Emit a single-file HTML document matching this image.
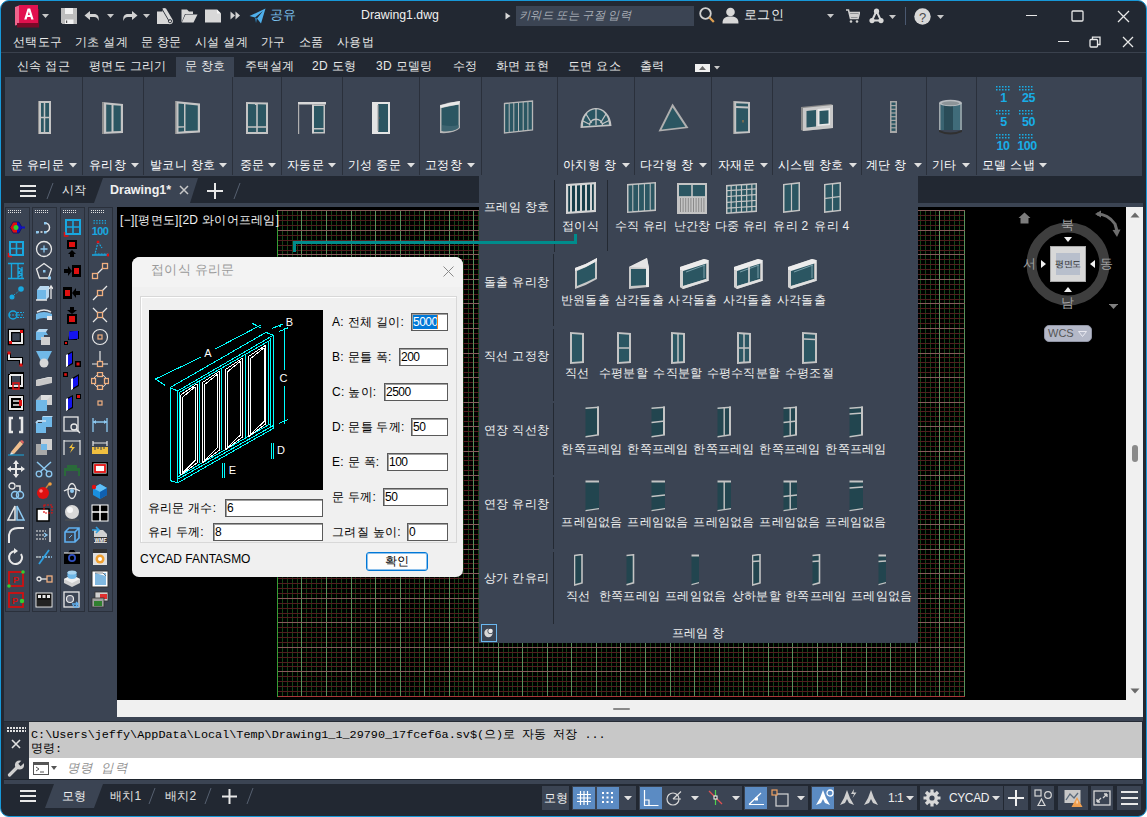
<!DOCTYPE html><html><head><meta charset="utf-8"><style>
*{box-sizing:border-box}
html,body{margin:0;padding:0;width:1147px;height:817px;overflow:hidden;background:#ffffff;font-family:"Liberation Sans",sans-serif}
#win{position:absolute;left:0;top:0;width:1147px;height:817px;background:#222832;border:1px solid #1798d8;border-radius:9px;overflow:hidden}
#root{position:absolute;left:0;top:0;width:1147px;height:817px}
</style></head><body><div id="win"></div><div id="root">
<div style="position:absolute;left:5px;top:77px;width:1137px;height:99px;background:#3b4453;"></div><div style="position:absolute;left:176px;top:57px;width:58px;height:20px;background:#3b4453;"></div><div style="position:absolute;left:1px;top:52px;width:1145px;height:1px;background:#3a414d;"></div><div style="position:absolute;left:4px;top:203px;width:1139px;height:4px;background:#3b4453;"></div><div style="position:absolute;left:4px;top:207px;width:113px;height:514px;background:#3b4453;"></div><div style="position:absolute;left:117px;top:207px;width:1009px;height:493px;background:#000;"></div><div style="position:absolute;left:1126px;top:207px;width:17px;height:510px;background:#f0f0f0;"></div><div style="position:absolute;left:117px;top:700px;width:1009px;height:17px;background:#f0f0f0;"></div><div style="position:absolute;left:117px;top:717px;width:1026px;height:4px;background:#3b4453;"></div><div style="position:absolute;left:4px;top:721px;width:1139px;height:1px;background:#252b35;"></div><div style="position:absolute;left:4px;top:722px;width:25px;height:57px;background:#2c323d;"></div><div style="position:absolute;left:29px;top:722px;width:1113px;height:36px;background:#c8c8c8;"></div><div style="position:absolute;left:29px;top:758px;width:1113px;height:21px;background:#ffffff;"></div><div style="position:absolute;left:4px;top:779px;width:1139px;height:1px;background:#1e242d;"></div><div style="position:absolute;left:4px;top:780px;width:1139px;height:4px;background:#3b4453;"></div>
<svg style="position:absolute;left:14px;top:5px;" width="26" height="23" viewBox="0 0 26 23">
      <path d="M1 2 L5 0.5 L5 19.5 L1 20.5Z" fill="#f0648c"/>
      <rect x="3" y="18" width="22" height="4.5" fill="#7a0a28"/><rect x="23" y="4" width="2" height="16" fill="#7a0a28"/>
      <rect x="5" y="0" width="19" height="18" fill="#e2114f"/>
      <path d="M10.2 14.6 L13.6 3.4 H16.2 L19.6 14.6 H17.2 L16.5 12.1 H13.3 L12.6 14.6Z M13.9 10.1 H15.9 L14.9 6.4Z" fill="#fff"/></svg><svg style="position:absolute;left:42.0px;top:14.0px;" width="7" height="4" viewBox="0 0 7 4"><path d="M0 0H7L3.5 4Z" fill="#c8c8c8"/></svg><svg style="position:absolute;left:61px;top:8px;" width="17" height="17" viewBox="0 0 17 17"><path d="M0 0 H16 V16 H1.5 L0 14.5Z" fill="#bdbdbd"/><rect x="4" y="0" width="8" height="6" fill="#f2f2f2"/><rect x="4" y="11.5" width="8.5" height="4.5" fill="#f2f2f2"/><rect x="5" y="12.5" width="1.2" height="2.5" fill="#555"/></svg><svg style="position:absolute;left:84px;top:10px;" width="18" height="12" viewBox="0 0 18 12"><path d="M6 1 L0.5 5.5 L6 10 V7 H10 C12.5 7 14 8.5 14.5 11 C15.5 6.5 13.5 4 10 4 H6Z" fill="#d2d2d2"/></svg><svg style="position:absolute;left:107.0px;top:13.5px;" width="7" height="4" viewBox="0 0 7 4"><path d="M0 0H7L3.5 4Z" fill="#c8c8c8"/></svg><svg style="position:absolute;left:120px;top:10px;" width="18" height="12" viewBox="0 0 18 12"><path d="M12 1 L17.5 5.5 L12 10 V7 H8 C5.5 7 4 8.5 3.5 11 C2.5 6.5 4.5 4 8 4 H12Z" fill="#d2d2d2"/></svg><svg style="position:absolute;left:143.0px;top:13.5px;" width="7" height="4" viewBox="0 0 7 4"><path d="M0 0H7L3.5 4Z" fill="#c8c8c8"/></svg><svg style="position:absolute;left:157px;top:8px;" width="17" height="17" viewBox="0 0 17 17"><path d="M0 3.5 H5.5 L5.5 0.5 Q7 -0.5 9 0.5 L15.5 11.5 Q16.5 14 15 15.5 Q13.5 16.5 11.5 16 H0Z" fill="#d8d8d8"/><path d="M5 1 L12 13" stroke="#222832" stroke-width="0.9"/><circle cx="13" cy="13.2" r="1.6" fill="none" stroke="#222832" stroke-width="0.9"/></svg><svg style="position:absolute;left:181px;top:9px;" width="17" height="14" viewBox="0 0 17 14"><path d="M0.5 0.5 H6 L8 2.5 H12 V5 H4 L0.5 13.5Z" fill="#d8d8d8"/><path d="M4.5 5.5 H16.5 L12.5 13.5 H0.8Z" fill="#d8d8d8"/></svg><svg style="position:absolute;left:205px;top:9px;" width="17" height="14" viewBox="0 0 17 14"><path d="M0 0.5 H12 L16 4.5 V13.5 H0Z" fill="#d8d8d8"/><path d="M12 0.5 L16 4.5 H12Z" fill="#f4f4f4"/></svg><svg style="position:absolute;left:230px;top:11px;" width="11" height="9" viewBox="0 0 11 9"><path d="M0.5 0.5 L5 4.5 L0.5 8.5Z M5.5 0.5 L10 4.5 L5.5 8.5Z" fill="#d2d2d2"/></svg><svg style="position:absolute;left:249px;top:8px;" width="17" height="16" viewBox="0 0 17 16"><path d="M0.5 8 L16.5 0.5 L12 15.5 L8 10.5 L14 3 L6 9.5Z" fill="#4fb0ec"/><path d="M6 9.5 L7 15 L8 10.5Z" fill="#2f86c0"/></svg><div style="position:absolute;left:270px;top:7.25px;line-height:16.5px;font-size:12.5px;color:#7cc0ee;white-space:nowrap;;letter-spacing:0.3px">공유</div><div style="position:absolute;left:361px;top:7.35px;line-height:16.3px;font-size:12.3px;color:#f0f0f0;white-space:nowrap;">Drawing1.dwg</div><svg style="position:absolute;left:505px;top:12px;" width="6" height="8" viewBox="0 0 6 8"><path d="M0.5 0.5 L5.5 4 L0.5 7.5Z" fill="#d8d8d8"/></svg><div style="position:absolute;left:516px;top:6px;width:178px;height:20px;background:#3b4453;"></div><div style="position:absolute;left:519px;top:8.35px;line-height:15.3px;font-size:11.3px;color:#a8adb5;white-space:nowrap;font-style:italic;letter-spacing:0.3px">키워드 또는 구절 입력</div><svg style="position:absolute;left:699px;top:7px;" width="16" height="17" viewBox="0 0 16 17"><circle cx="6.5" cy="6.5" r="5.3" stroke="#d0d0d0" stroke-width="1.8" fill="none"/><path d="M10.3 10.3 L14.8 15" stroke="#e0a050" stroke-width="2.2"/></svg><svg style="position:absolute;left:722px;top:7px;" width="17" height="17" viewBox="0 0 17 17"><circle cx="8.5" cy="5" r="4.3" fill="#d8d8d8"/><path d="M0.5 16.5 C0.5 11 3.5 9.5 8.5 9.5 C13.5 9.5 16.5 11 16.5 16.5Z" fill="#d8d8d8"/></svg><div style="position:absolute;left:744px;top:7.25px;line-height:16.5px;font-size:12.5px;color:#f0f0f0;white-space:nowrap;;letter-spacing:0.3px">로그인</div><svg style="position:absolute;left:827.0px;top:13.5px;" width="7" height="4" viewBox="0 0 7 4"><path d="M0 0H7L3.5 4Z" fill="#c8c8c8"/></svg><svg style="position:absolute;left:846px;top:9px;" width="14" height="14" viewBox="0 0 14 14"><path d="M0 1 H2.5 L4.5 9.5 H12 L13.5 3.5 H3.5" stroke="#d0d0d0" stroke-width="1.6" fill="none"/><rect x="4" y="4.5" width="8.5" height="4" fill="#d0d0d0"/><circle cx="5" cy="12.5" r="1.3" fill="#d0d0d0"/><circle cx="11" cy="12.5" r="1.3" fill="#d0d0d0"/></svg><svg style="position:absolute;left:869px;top:8px;" width="16" height="16" viewBox="0 0 16 16"><path d="M7.5 3 L3 12.5 H12Z" stroke="#d8d8d8" stroke-width="2" fill="none"/><circle cx="7.5" cy="3.2" r="2.6" fill="#d8d8d8"/><circle cx="3" cy="12.6" r="2.6" fill="#d8d8d8"/><circle cx="12" cy="12.6" r="2.6" fill="#d8d8d8"/></svg><svg style="position:absolute;left:889.0px;top:14.5px;" width="7" height="4" viewBox="0 0 7 4"><path d="M0 0H7L3.5 4Z" fill="#c8c8c8"/></svg><div style="position:absolute;left:905px;top:7px;width:1px;height:18px;background:#4a5870;"></div><svg style="position:absolute;left:914px;top:8px;" width="17" height="17" viewBox="0 0 17 17"><circle cx="8.5" cy="8.5" r="8.2" fill="#d8d8d8"/><text x="8.5" y="13.5" font-size="13" text-anchor="middle" fill="#4a4a4a" font-family="Liberation Sans">?</text></svg><svg style="position:absolute;left:937.0px;top:14.5px;" width="7" height="4" viewBox="0 0 7 4"><path d="M0 0H7L3.5 4Z" fill="#c8c8c8"/></svg><div style="position:absolute;left:1026px;top:15px;width:11px;height:1px;background:#e8e8e8;"></div><svg style="position:absolute;left:1071px;top:10px;" width="13" height="12" viewBox="0 0 13 12"><rect x="1" y="1" width="11" height="10" stroke="#e8e8e8" stroke-width="1.3" fill="none" rx="1"/></svg><svg style="position:absolute;left:1117px;top:10px;" width="13" height="13" viewBox="0 0 13 13"><path d="M1 1 L12 12 M12 1 L1 12" stroke="#e8e8e8" stroke-width="1.3"/></svg><div style="position:absolute;left:1058px;top:41px;width:11px;height:1px;background:#e8e8e8;"></div><svg style="position:absolute;left:1089px;top:36px;" width="12" height="12" viewBox="0 0 12 12"><rect x="1" y="3.5" width="7.5" height="7.5" stroke="#e8e8e8" stroke-width="1.3" fill="none" rx="1"/><path d="M3.5 3.5 V1.2 H11 V8.5 H8.5" stroke="#e8e8e8" stroke-width="1.3" fill="none"/></svg><svg style="position:absolute;left:1122px;top:36px;" width="12" height="12" viewBox="0 0 12 12"><path d="M1 1 L11 11 M11 1 L1 11" stroke="#e8e8e8" stroke-width="1.3"/></svg>
<div style="position:absolute;left:13px;top:34.0px;line-height:16px;font-size:12px;color:#e8e8e8;white-space:nowrap;;letter-spacing:0.3px">선택도구</div><div style="position:absolute;left:75px;top:34.0px;line-height:16px;font-size:12px;color:#e8e8e8;white-space:nowrap;;letter-spacing:0.3px">기초 설계</div><div style="position:absolute;left:141px;top:34.0px;line-height:16px;font-size:12px;color:#e8e8e8;white-space:nowrap;;letter-spacing:0.3px">문 창문</div><div style="position:absolute;left:195px;top:34.0px;line-height:16px;font-size:12px;color:#e8e8e8;white-space:nowrap;;letter-spacing:0.3px">시설 설계</div><div style="position:absolute;left:261px;top:34.0px;line-height:16px;font-size:12px;color:#e8e8e8;white-space:nowrap;;letter-spacing:0.3px">가구</div><div style="position:absolute;left:299px;top:34.0px;line-height:16px;font-size:12px;color:#e8e8e8;white-space:nowrap;;letter-spacing:0.3px">소품</div><div style="position:absolute;left:337px;top:34.0px;line-height:16px;font-size:12px;color:#e8e8e8;white-space:nowrap;;letter-spacing:0.3px">사용법</div>
<div style="position:absolute;left:17px;top:58.0px;line-height:16px;font-size:12px;color:#e8e8e8;white-space:nowrap;;letter-spacing:0.3px">신속 접근</div><div style="position:absolute;left:89px;top:58.0px;line-height:16px;font-size:12px;color:#e8e8e8;white-space:nowrap;;letter-spacing:0.3px">평면도 그리기</div><div style="position:absolute;left:185px;top:58.0px;line-height:16px;font-size:12px;color:#e8e8e8;white-space:nowrap;;letter-spacing:0.3px">문 창호</div><div style="position:absolute;left:245px;top:58.0px;line-height:16px;font-size:12px;color:#e8e8e8;white-space:nowrap;;letter-spacing:0.3px">주택설계</div><div style="position:absolute;left:312px;top:58.0px;line-height:16px;font-size:12px;color:#e8e8e8;white-space:nowrap;;letter-spacing:0.3px">2D 도형</div><div style="position:absolute;left:376px;top:58.0px;line-height:16px;font-size:12px;color:#e8e8e8;white-space:nowrap;;letter-spacing:0.3px">3D 모델링</div><div style="position:absolute;left:453px;top:58.0px;line-height:16px;font-size:12px;color:#e8e8e8;white-space:nowrap;;letter-spacing:0.3px">수정</div><div style="position:absolute;left:496px;top:58.0px;line-height:16px;font-size:12px;color:#e8e8e8;white-space:nowrap;;letter-spacing:0.3px">화면 표현</div><div style="position:absolute;left:568px;top:58.0px;line-height:16px;font-size:12px;color:#e8e8e8;white-space:nowrap;;letter-spacing:0.3px">도면 요소</div><div style="position:absolute;left:640px;top:58.0px;line-height:16px;font-size:12px;color:#e8e8e8;white-space:nowrap;;letter-spacing:0.3px">출력</div><div style="position:absolute;left:695px;top:64px;width:15px;height:8px;background:#f0f0f0;"></div><svg style="position:absolute;left:699px;top:66px;" width="7" height="4" viewBox="0 0 7 4"><path d="M0 4 L3.5 0 L7 4Z" fill="#6a6a6a"/></svg><svg style="position:absolute;left:713.5px;top:66.25px;" width="6" height="3.5" viewBox="0 0 6 3.5"><path d="M0 0H6L3.0 3.5Z" fill="#c8c8c8"/></svg>
<div style="position:absolute;left:82px;top:77px;width:1px;height:98px;background:#2a303b;"></div><div style="position:absolute;left:143px;top:77px;width:1px;height:98px;background:#2a303b;"></div><div style="position:absolute;left:232px;top:77px;width:1px;height:98px;background:#2a303b;"></div><div style="position:absolute;left:281px;top:77px;width:1px;height:98px;background:#2a303b;"></div><div style="position:absolute;left:342px;top:77px;width:1px;height:98px;background:#2a303b;"></div><div style="position:absolute;left:419px;top:77px;width:1px;height:98px;background:#2a303b;"></div><div style="position:absolute;left:481px;top:77px;width:1px;height:98px;background:#2a303b;"></div><div style="position:absolute;left:557px;top:77px;width:1px;height:98px;background:#2a303b;"></div><div style="position:absolute;left:634px;top:77px;width:1px;height:98px;background:#2a303b;"></div><div style="position:absolute;left:711px;top:77px;width:1px;height:98px;background:#2a303b;"></div><div style="position:absolute;left:772px;top:77px;width:1px;height:98px;background:#2a303b;"></div><div style="position:absolute;left:861px;top:77px;width:1px;height:98px;background:#2a303b;"></div><div style="position:absolute;left:926px;top:77px;width:1px;height:98px;background:#2a303b;"></div><div style="position:absolute;left:976px;top:77px;width:1px;height:98px;background:#2a303b;"></div><div style="position:absolute;left:11px;top:157.0px;line-height:16px;font-size:12px;color:#ffffff;white-space:nowrap;;letter-spacing:0.3px">문 유리문</div><svg style="position:absolute;left:68.5px;top:163.25px;" width="8" height="4.5" viewBox="0 0 8 4.5"><path d="M0 0H8L4.0 4.5Z" fill="#e0e0e0"/></svg><div style="position:absolute;left:89px;top:157.0px;line-height:16px;font-size:12px;color:#ffffff;white-space:nowrap;;letter-spacing:0.3px">유리창</div><svg style="position:absolute;left:130.5px;top:163.25px;" width="8" height="4.5" viewBox="0 0 8 4.5"><path d="M0 0H8L4.0 4.5Z" fill="#e0e0e0"/></svg><div style="position:absolute;left:150px;top:157.0px;line-height:16px;font-size:12px;color:#ffffff;white-space:nowrap;;letter-spacing:0.3px">발코니 창호</div><svg style="position:absolute;left:218.5px;top:163.25px;" width="8" height="4.5" viewBox="0 0 8 4.5"><path d="M0 0H8L4.0 4.5Z" fill="#e0e0e0"/></svg><div style="position:absolute;left:240px;top:157.0px;line-height:16px;font-size:12px;color:#ffffff;white-space:nowrap;;letter-spacing:0.3px">중문</div><svg style="position:absolute;left:267.5px;top:163.25px;" width="8" height="4.5" viewBox="0 0 8 4.5"><path d="M0 0H8L4.0 4.5Z" fill="#e0e0e0"/></svg><div style="position:absolute;left:287px;top:157.0px;line-height:16px;font-size:12px;color:#ffffff;white-space:nowrap;;letter-spacing:0.3px">자동문</div><svg style="position:absolute;left:327.5px;top:163.25px;" width="8" height="4.5" viewBox="0 0 8 4.5"><path d="M0 0H8L4.0 4.5Z" fill="#e0e0e0"/></svg><div style="position:absolute;left:348px;top:157.0px;line-height:16px;font-size:12px;color:#ffffff;white-space:nowrap;;letter-spacing:0.3px">기성 중문</div><svg style="position:absolute;left:406.5px;top:163.25px;" width="8" height="4.5" viewBox="0 0 8 4.5"><path d="M0 0H8L4.0 4.5Z" fill="#e0e0e0"/></svg><div style="position:absolute;left:425px;top:157.0px;line-height:16px;font-size:12px;color:#ffffff;white-space:nowrap;;letter-spacing:0.3px">고정창</div><svg style="position:absolute;left:466.5px;top:163.25px;" width="8" height="4.5" viewBox="0 0 8 4.5"><path d="M0 0H8L4.0 4.5Z" fill="#e0e0e0"/></svg><div style="position:absolute;left:563px;top:157.0px;line-height:16px;font-size:12px;color:#ffffff;white-space:nowrap;;letter-spacing:0.3px">아치형 창</div><svg style="position:absolute;left:621.5px;top:163.25px;" width="8" height="4.5" viewBox="0 0 8 4.5"><path d="M0 0H8L4.0 4.5Z" fill="#e0e0e0"/></svg><div style="position:absolute;left:640px;top:157.0px;line-height:16px;font-size:12px;color:#ffffff;white-space:nowrap;;letter-spacing:0.3px">다각형 창</div><svg style="position:absolute;left:698.5px;top:163.25px;" width="8" height="4.5" viewBox="0 0 8 4.5"><path d="M0 0H8L4.0 4.5Z" fill="#e0e0e0"/></svg><div style="position:absolute;left:718px;top:157.0px;line-height:16px;font-size:12px;color:#ffffff;white-space:nowrap;;letter-spacing:0.3px">자재문</div><svg style="position:absolute;left:759.5px;top:163.25px;" width="8" height="4.5" viewBox="0 0 8 4.5"><path d="M0 0H8L4.0 4.5Z" fill="#e0e0e0"/></svg><div style="position:absolute;left:778px;top:157.0px;line-height:16px;font-size:12px;color:#ffffff;white-space:nowrap;;letter-spacing:0.3px">시스템 창호</div><svg style="position:absolute;left:848.5px;top:163.25px;" width="8" height="4.5" viewBox="0 0 8 4.5"><path d="M0 0H8L4.0 4.5Z" fill="#e0e0e0"/></svg><div style="position:absolute;left:866px;top:157.0px;line-height:16px;font-size:12px;color:#ffffff;white-space:nowrap;;letter-spacing:0.3px">계단 창</div><svg style="position:absolute;left:913.5px;top:163.25px;" width="8" height="4.5" viewBox="0 0 8 4.5"><path d="M0 0H8L4.0 4.5Z" fill="#e0e0e0"/></svg><div style="position:absolute;left:932px;top:157.0px;line-height:16px;font-size:12px;color:#ffffff;white-space:nowrap;;letter-spacing:0.3px">기타</div><svg style="position:absolute;left:961.5px;top:163.25px;" width="8" height="4.5" viewBox="0 0 8 4.5"><path d="M0 0H8L4.0 4.5Z" fill="#e0e0e0"/></svg><div style="position:absolute;left:982px;top:157.0px;line-height:16px;font-size:12px;color:#ffffff;white-space:nowrap;;letter-spacing:0.3px">모델 스냅</div><svg style="position:absolute;left:1038.5px;top:163.25px;" width="8" height="4.5" viewBox="0 0 8 4.5"><path d="M0 0H8L4.0 4.5Z" fill="#e0e0e0"/></svg><svg style="position:absolute;left:38px;top:101px" width="14" height="34" viewBox="0 0 14 34"><path d="M0.00 0.00 L13.00 0.00 L13.00 33.00 L0.00 33.00Z" fill="#c4c4c4" /><path d="M0.00 0.00 L1.00 0.00 L1.00 33.00 L0.00 33.00Z" fill="#8e8e8e" /><path d="M3.00 2.00 L5.75 2.00 L5.75 15.75 L3.00 15.75Z" fill="#2b5662" /><path d="M3.00 17.25 L5.75 17.25 L5.75 31.00 L3.00 31.00Z" fill="#2b5662" /><path d="M7.25 2.00 L11.00 2.00 L11.00 15.75 L7.25 15.75Z" fill="#2b5662" /><path d="M7.25 17.25 L11.00 17.25 L11.00 31.00 L7.25 31.00Z" fill="#2b5662" /></svg><svg style="position:absolute;left:102px;top:102px" width="22" height="33" viewBox="0 0 22 33"><path d="M0.00 0.00 L21.00 2.00 L21.00 31.00 L0.00 32.00Z" fill="#c4c4c4" /><path d="M0.00 0.00 L2.00 0.19 L2.00 31.90 L0.00 32.00Z" fill="#8e8e8e" /><path d="M4.20 2.56 L9.50 3.01 L9.50 29.44 L4.20 29.64Z" fill="#2b5662" /><path d="M11.50 3.18 L18.80 3.81 L18.80 29.09 L11.50 29.37Z" fill="#2b5662" /></svg><svg style="position:absolute;left:175px;top:101px;" width="26" height="34" viewBox="0 0 26 34"><path d="M0.00 0.00 L25.00 2.50 L25.00 31.50 L0.00 33.00Z" fill="#c4c4c4" /><path d="M0.00 0.00 L1.50 0.15 L1.50 32.91 L0.00 33.00Z" fill="#8e8e8e" /><path d="M3.50 2.51 L9.00 3.00 L9.00 25.20 L3.50 25.33Z" fill="#2b5662" /><path d="M3.50 26.63 L9.00 26.46 L9.00 30.36 L3.50 30.63Z" fill="#2b5662" /><path d="M10.50 3.33 L22.80 4.41 L22.80 29.50 L10.50 30.09Z" fill="#2b5662" /></svg><svg style="position:absolute;left:246px;top:102px" width="23" height="33" viewBox="0 0 23 33"><path d="M0.00 0.00 L22.00 0.50 L22.00 32.00 L0.00 32.00Z" fill="#c4c4c4" /><path d="M2.00 2.04 L10.20 2.22 L10.20 24.22 L2.00 24.17Z" fill="#2b5662" /><path d="M2.00 25.77 L10.20 25.81 L10.20 30.01 L2.00 30.00Z" fill="#2b5662" /><path d="M11.80 2.25 L20.00 2.43 L20.00 24.27 L11.80 24.23Z" fill="#2b5662" /><path d="M11.80 25.81 L20.00 25.85 L20.00 30.03 L11.80 30.02Z" fill="#2b5662" /></svg><svg style="position:absolute;left:298px;top:102px;" width="28" height="33" viewBox="0 0 28 33"><rect x="0" y="0" width="28" height="2.5" fill="#d8d8d8"/><rect x="0" y="2" width="1.2" height="30" fill="#b0b0b0"/>
      <rect x="14" y="2.5" width="13" height="29" fill="#c4c4c4"/><rect x="16" y="4" width="9.5" height="22" fill="#2b5662"/><rect x="16" y="27.5" width="9.5" height="2.5" fill="#2b5662"/>
      <rect x="14.5" y="2.5" width="1" height="29" fill="#e0e0e0"/></svg><svg style="position:absolute;left:372px;top:102px" width="19" height="33" viewBox="0 0 19 33"><path d="M0.00 0.00 L18.00 0.00 L18.00 32.00 L0.00 32.00Z" fill="#e4e4e4" /><path d="M6.15 2.00 L16.00 2.00 L16.00 30.00 L6.15 30.00Z" fill="#2b5662" /><rect x="5.5" y="3" width="1" height="26" fill="#9a9a9a"/><rect x="7" y="15" width="1" height="2" fill="#555"/></svg><svg style="position:absolute;left:438px;top:101px;" width="24" height="35" viewBox="0 0 24 35"><path d="M2 4 Q12 1 22 0 V27 Q16 33 2 32Z" fill="#b8b8b8"/><path d="M3.5 7 Q12 5 20.5 3.5 V26.5 Q15 31 3.5 30Z" fill="#2b5662"/>
      <path d="M2 4.5 Q12 1 22 0 L21 3.5 Q12 4 2.5 7Z" fill="#e8e8e8"/><path d="M4 24 Q14 26 20.5 24 V27 Q15 31 4 30Z" fill="#3d6470"/></svg><svg style="position:absolute;left:503px;top:100px;" width="31" height="35" viewBox="0 0 31 35"><path d="M1.5 3.5 L29.5 1 V30 L1.5 33Z" fill="#2b5662" stroke="#b8b8b8" stroke-width="1.3"/><path d="M6.2 3.08 V32.5" stroke="#b8b8b8" stroke-width="1"/><path d="M10.8 2.67 V32.0" stroke="#b8b8b8" stroke-width="1"/><path d="M15.5 2.25 V31.5" stroke="#b8b8b8" stroke-width="1"/><path d="M20.2 1.83 V31.0" stroke="#b8b8b8" stroke-width="1"/><path d="M24.9 1.42 V30.5" stroke="#b8b8b8" stroke-width="1"/></svg><svg style="position:absolute;left:579px;top:104px;" width="34" height="26" viewBox="0 0 34 26"><path d="M1.5 24 A15.5 19 0 0 1 32.5 22 Z" fill="#c4c4c4"/>
      <path d="M4 22.2 A13 16 0 0 1 30 20.5 Z" fill="#2b5662"/>
      <path d="M17 4.5 V21 M7 10 L12.5 19 M27 10 L21.5 19 M4 17 L11 20.5 M30 16.5 L23 20" stroke="#c4c4c4" stroke-width="1.3"/>
      <path d="M10.5 21.5 A6.5 6 0 0 1 23.5 21" stroke="#c4c4c4" stroke-width="1.3" fill="none"/></svg><svg style="position:absolute;left:657px;top:102px;" width="33" height="31" viewBox="0 0 33 31"><path d="M15.5 1.5 L31.5 26 L1.5 29.5Z" fill="#b0b0b0"/><path d="M15.6 5.5 L28.3 24.8 L4.6 27.6Z" fill="#2b5662"/></svg><svg style="position:absolute;left:733px;top:101px" width="18" height="34" viewBox="0 0 18 34"><path d="M0.00 0.00 L17.00 1.00 L17.00 32.00 L0.00 33.00Z" fill="#c4c4c4" /><path d="M0.00 0.00 L1.20 0.07 L1.20 32.93 L0.00 33.00Z" fill="#8e8e8e" /><path d="M3.20 2.17 L15.00 2.78 L15.00 5.56 L3.20 5.07Z" fill="#2b5662" /><path d="M3.20 7.05 L15.00 7.45 L15.00 30.22 L3.20 30.83Z" fill="#2b5662" /><rect x="9.5" y="19" width="1" height="2.5" fill="#c08040"/></svg><svg style="position:absolute;left:800px;top:103px;" width="34" height="28" viewBox="0 0 34 28"><path d="M1 4 L31 1 L33 2 V25 L3 28 L1 27Z" fill="#8a8a8a"/>
      <path d="M3 5 L33 2 V25 L3 28Z" fill="#c8c8c8"/>
      <path d="M6.5 8 L16 7 V23.5 L6.5 24.5Z" fill="#2b5662"/><path d="M17.5 6 L30 5 V22 L17.5 23Z" fill="#e8e8e8"/><path d="M19.5 8 L28.5 7.2 V20.5 L19.5 21.2Z" fill="#2b5662"/></svg><svg style="position:absolute;left:890px;top:101px;" width="7" height="32" viewBox="0 0 7 32"><rect x="0" y="0" width="7" height="32" fill="#a8a8a8"/><rect x="1.5" y="1.5" width="4" height="2.5" fill="#2b5662"/><rect x="1.5" y="5.2" width="4" height="2.5" fill="#2b5662"/><rect x="1.5" y="8.9" width="4" height="2.5" fill="#2b5662"/><rect x="1.5" y="12.6" width="4" height="2.5" fill="#2b5662"/><rect x="1.5" y="16.3" width="4" height="2.5" fill="#2b5662"/><rect x="1.5" y="20.0" width="4" height="2.5" fill="#2b5662"/><rect x="1.5" y="23.7" width="4" height="2.5" fill="#2b5662"/><rect x="1.5" y="27.4" width="4" height="2.5" fill="#2b5662"/></svg><svg style="position:absolute;left:938px;top:99px;" width="25" height="37" viewBox="0 0 25 37"><rect x="1" y="4" width="23" height="27" fill="#2a4c58"/>
      <path d="M1 4 H6 V31 H1Z" fill="#3a6472"/><path d="M15 4 H22 V31 H15Z" fill="#406c7a"/><path d="M22 4 H24 V31 H22Z" fill="#8a9aa0"/><path d="M1 4 H2.5 V31 H1Z" fill="#a0a8ac"/>
      <ellipse cx="12.5" cy="4" rx="11.5" ry="3.3" fill="#b8bcc0"/><ellipse cx="12.5" cy="4.3" rx="9" ry="2" fill="#8c9498"/>
      <path d="M1 31 Q12.5 36 24 31 V33 Q12.5 38 1 33Z" fill="#303030"/></svg><svg style="position:absolute;left:996px;top:86px;" width="15" height="5" viewBox="0 0 15 5"><rect x="0" y="0" width="1.5" height="1.5" fill="#18ade6"/><rect x="0" y="3" width="1.5" height="1.5" fill="#18ade6"/><rect x="3" y="0" width="1.5" height="1.5" fill="#18ade6"/><rect x="3" y="3" width="1.5" height="1.5" fill="#18ade6"/><rect x="6" y="0" width="1.5" height="1.5" fill="#18ade6"/><rect x="6" y="3" width="1.5" height="1.5" fill="#18ade6"/><rect x="9" y="0" width="1.5" height="1.5" fill="#18ade6"/><rect x="9" y="3" width="1.5" height="1.5" fill="#18ade6"/><rect x="12" y="0" width="1.5" height="1.5" fill="#18ade6"/><rect x="12" y="3" width="1.5" height="1.5" fill="#18ade6"/></svg><svg style="position:absolute;left:1019px;top:86px;" width="15" height="5" viewBox="0 0 15 5"><rect x="0" y="0" width="1.5" height="1.5" fill="#18ade6"/><rect x="0" y="3" width="1.5" height="1.5" fill="#18ade6"/><rect x="3" y="0" width="1.5" height="1.5" fill="#18ade6"/><rect x="3" y="3" width="1.5" height="1.5" fill="#18ade6"/><rect x="6" y="0" width="1.5" height="1.5" fill="#18ade6"/><rect x="6" y="3" width="1.5" height="1.5" fill="#18ade6"/><rect x="9" y="0" width="1.5" height="1.5" fill="#18ade6"/><rect x="9" y="3" width="1.5" height="1.5" fill="#18ade6"/><rect x="12" y="0" width="1.5" height="1.5" fill="#18ade6"/><rect x="12" y="3" width="1.5" height="1.5" fill="#18ade6"/></svg><svg style="position:absolute;left:996px;top:110px;" width="15" height="5" viewBox="0 0 15 5"><rect x="0" y="0" width="1.5" height="1.5" fill="#18ade6"/><rect x="0" y="3" width="1.5" height="1.5" fill="#18ade6"/><rect x="3" y="0" width="1.5" height="1.5" fill="#18ade6"/><rect x="3" y="3" width="1.5" height="1.5" fill="#18ade6"/><rect x="6" y="0" width="1.5" height="1.5" fill="#18ade6"/><rect x="6" y="3" width="1.5" height="1.5" fill="#18ade6"/><rect x="9" y="0" width="1.5" height="1.5" fill="#18ade6"/><rect x="9" y="3" width="1.5" height="1.5" fill="#18ade6"/><rect x="12" y="0" width="1.5" height="1.5" fill="#18ade6"/><rect x="12" y="3" width="1.5" height="1.5" fill="#18ade6"/></svg><svg style="position:absolute;left:1019px;top:110px;" width="15" height="5" viewBox="0 0 15 5"><rect x="0" y="0" width="1.5" height="1.5" fill="#18ade6"/><rect x="0" y="3" width="1.5" height="1.5" fill="#18ade6"/><rect x="3" y="0" width="1.5" height="1.5" fill="#18ade6"/><rect x="3" y="3" width="1.5" height="1.5" fill="#18ade6"/><rect x="6" y="0" width="1.5" height="1.5" fill="#18ade6"/><rect x="6" y="3" width="1.5" height="1.5" fill="#18ade6"/><rect x="9" y="0" width="1.5" height="1.5" fill="#18ade6"/><rect x="9" y="3" width="1.5" height="1.5" fill="#18ade6"/><rect x="12" y="0" width="1.5" height="1.5" fill="#18ade6"/><rect x="12" y="3" width="1.5" height="1.5" fill="#18ade6"/></svg><svg style="position:absolute;left:996px;top:134px;" width="15" height="5" viewBox="0 0 15 5"><rect x="0" y="0" width="1.5" height="1.5" fill="#18ade6"/><rect x="0" y="3" width="1.5" height="1.5" fill="#18ade6"/><rect x="3" y="0" width="1.5" height="1.5" fill="#18ade6"/><rect x="3" y="3" width="1.5" height="1.5" fill="#18ade6"/><rect x="6" y="0" width="1.5" height="1.5" fill="#18ade6"/><rect x="6" y="3" width="1.5" height="1.5" fill="#18ade6"/><rect x="9" y="0" width="1.5" height="1.5" fill="#18ade6"/><rect x="9" y="3" width="1.5" height="1.5" fill="#18ade6"/><rect x="12" y="0" width="1.5" height="1.5" fill="#18ade6"/><rect x="12" y="3" width="1.5" height="1.5" fill="#18ade6"/></svg><svg style="position:absolute;left:1019px;top:134px;" width="15" height="5" viewBox="0 0 15 5"><rect x="0" y="0" width="1.5" height="1.5" fill="#18ade6"/><rect x="0" y="3" width="1.5" height="1.5" fill="#18ade6"/><rect x="3" y="0" width="1.5" height="1.5" fill="#18ade6"/><rect x="3" y="3" width="1.5" height="1.5" fill="#18ade6"/><rect x="6" y="0" width="1.5" height="1.5" fill="#18ade6"/><rect x="6" y="3" width="1.5" height="1.5" fill="#18ade6"/><rect x="9" y="0" width="1.5" height="1.5" fill="#18ade6"/><rect x="9" y="3" width="1.5" height="1.5" fill="#18ade6"/><rect x="12" y="0" width="1.5" height="1.5" fill="#18ade6"/><rect x="12" y="3" width="1.5" height="1.5" fill="#18ade6"/></svg><div style="position:absolute;left:988.5px;width:30px;text-align:center;top:91.5px;line-height:12px;font-size:12.5px;color:#18ade6;white-space:nowrap;font-weight:bold;letter-spacing:-0.5px">1</div><div style="position:absolute;left:1013.5px;width:30px;text-align:center;top:91.5px;line-height:12px;font-size:12.5px;color:#18ade6;white-space:nowrap;font-weight:bold;letter-spacing:-0.5px">25</div><div style="position:absolute;left:988.5px;width:30px;text-align:center;top:115.5px;line-height:12px;font-size:12.5px;color:#18ade6;white-space:nowrap;font-weight:bold;letter-spacing:-0.5px">5</div><div style="position:absolute;left:1013.5px;width:30px;text-align:center;top:115.5px;line-height:12px;font-size:12.5px;color:#18ade6;white-space:nowrap;font-weight:bold;letter-spacing:-0.5px">50</div><div style="position:absolute;left:988.0px;width:30px;text-align:center;top:139.5px;line-height:12px;font-size:12.5px;color:#18ade6;white-space:nowrap;font-weight:bold;letter-spacing:-0.5px">10</div><div style="position:absolute;left:1012.0px;width:30px;text-align:center;top:139.5px;line-height:12px;font-size:12.5px;color:#18ade6;white-space:nowrap;font-weight:bold;letter-spacing:-0.5px">100</div>
<div style="position:absolute;left:20px;top:185px;width:16px;height:2px;background:#e8e8e8;"></div><div style="position:absolute;left:20px;top:190px;width:16px;height:2px;background:#e8e8e8;"></div><div style="position:absolute;left:20px;top:195px;width:16px;height:2px;background:#e8e8e8;"></div><svg style="position:absolute;left:46px;top:182px;" width="8" height="18" viewBox="0 0 8 18"><path d="M7 1 L1 17" stroke="#566070" stroke-width="1"/></svg><div style="position:absolute;left:62px;top:182.0px;line-height:16px;font-size:12px;color:#e8e8e8;white-space:nowrap;;letter-spacing:0.3px">시작</div><svg style="position:absolute;left:94px;top:178px;" width="105" height="26" viewBox="0 0 105 26"><path d="M9 0 H104 L96 25 H0Z" fill="#3b4453"/></svg><div style="position:absolute;left:110px;top:182.25px;line-height:16.5px;font-size:12.5px;color:#f0f0f0;white-space:nowrap;font-weight:bold">Drawing1*</div><svg style="position:absolute;left:179px;top:185px;" width="10" height="10" viewBox="0 0 10 10"><path d="M1 1 L9 9 M9 1 L1 9" stroke="#c8c8c8" stroke-width="1.5"/></svg><svg style="position:absolute;left:206px;top:182px;" width="18" height="18" viewBox="0 0 18 18"><path d="M9 1 V17 M1 9 H17" stroke="#e8e8e8" stroke-width="2"/></svg><svg style="position:absolute;left:233px;top:182px;" width="8" height="18" viewBox="0 0 8 18"><path d="M7 1 L1 17" stroke="#566070" stroke-width="1"/></svg>
<div style="position:absolute;left:5px;top:207px;width:25px;height:405px;background:#3b4453;border:1px solid #2a303b"></div><svg style="position:absolute;left:8px;top:209px;shape-rendering:crispEdges" width="19" height="5" viewBox="0 0 19 5"><rect x="0" y="1" width="1" height="1" fill="#e0e0e0"/><rect x="0" y="3" width="1" height="1" fill="#e0e0e0"/><rect x="2" y="1" width="1" height="1" fill="#e0e0e0"/><rect x="2" y="3" width="1" height="1" fill="#e0e0e0"/><rect x="4" y="1" width="1" height="1" fill="#e0e0e0"/><rect x="4" y="3" width="1" height="1" fill="#e0e0e0"/><rect x="6" y="1" width="1" height="1" fill="#e0e0e0"/><rect x="6" y="3" width="1" height="1" fill="#e0e0e0"/><rect x="8" y="1" width="1" height="1" fill="#e0e0e0"/><rect x="8" y="3" width="1" height="1" fill="#e0e0e0"/><rect x="10" y="1" width="1" height="1" fill="#e0e0e0"/><rect x="10" y="3" width="1" height="1" fill="#e0e0e0"/><rect x="12" y="1" width="1" height="1" fill="#e0e0e0"/><rect x="12" y="3" width="1" height="1" fill="#e0e0e0"/></svg><div style="position:absolute;left:32px;top:207px;width:25px;height:405px;background:#3b4453;border:1px solid #2a303b"></div><svg style="position:absolute;left:35px;top:209px;shape-rendering:crispEdges" width="19" height="5" viewBox="0 0 19 5"><rect x="0" y="1" width="1" height="1" fill="#e0e0e0"/><rect x="0" y="3" width="1" height="1" fill="#e0e0e0"/><rect x="2" y="1" width="1" height="1" fill="#e0e0e0"/><rect x="2" y="3" width="1" height="1" fill="#e0e0e0"/><rect x="4" y="1" width="1" height="1" fill="#e0e0e0"/><rect x="4" y="3" width="1" height="1" fill="#e0e0e0"/><rect x="6" y="1" width="1" height="1" fill="#e0e0e0"/><rect x="6" y="3" width="1" height="1" fill="#e0e0e0"/><rect x="8" y="1" width="1" height="1" fill="#e0e0e0"/><rect x="8" y="3" width="1" height="1" fill="#e0e0e0"/><rect x="10" y="1" width="1" height="1" fill="#e0e0e0"/><rect x="10" y="3" width="1" height="1" fill="#e0e0e0"/><rect x="12" y="1" width="1" height="1" fill="#e0e0e0"/><rect x="12" y="3" width="1" height="1" fill="#e0e0e0"/></svg><div style="position:absolute;left:60px;top:207px;width:25px;height:405px;background:#3b4453;border:1px solid #2a303b"></div><svg style="position:absolute;left:63px;top:209px;shape-rendering:crispEdges" width="19" height="5" viewBox="0 0 19 5"><rect x="0" y="1" width="1" height="1" fill="#e0e0e0"/><rect x="0" y="3" width="1" height="1" fill="#e0e0e0"/><rect x="2" y="1" width="1" height="1" fill="#e0e0e0"/><rect x="2" y="3" width="1" height="1" fill="#e0e0e0"/><rect x="4" y="1" width="1" height="1" fill="#e0e0e0"/><rect x="4" y="3" width="1" height="1" fill="#e0e0e0"/><rect x="6" y="1" width="1" height="1" fill="#e0e0e0"/><rect x="6" y="3" width="1" height="1" fill="#e0e0e0"/><rect x="8" y="1" width="1" height="1" fill="#e0e0e0"/><rect x="8" y="3" width="1" height="1" fill="#e0e0e0"/><rect x="10" y="1" width="1" height="1" fill="#e0e0e0"/><rect x="10" y="3" width="1" height="1" fill="#e0e0e0"/><rect x="12" y="1" width="1" height="1" fill="#e0e0e0"/><rect x="12" y="3" width="1" height="1" fill="#e0e0e0"/></svg><div style="position:absolute;left:88px;top:207px;width:25px;height:405px;background:#3b4453;border:1px solid #2a303b"></div><svg style="position:absolute;left:91px;top:209px;shape-rendering:crispEdges" width="19" height="5" viewBox="0 0 19 5"><rect x="0" y="1" width="1" height="1" fill="#e0e0e0"/><rect x="0" y="3" width="1" height="1" fill="#e0e0e0"/><rect x="2" y="1" width="1" height="1" fill="#e0e0e0"/><rect x="2" y="3" width="1" height="1" fill="#e0e0e0"/><rect x="4" y="1" width="1" height="1" fill="#e0e0e0"/><rect x="4" y="3" width="1" height="1" fill="#e0e0e0"/><rect x="6" y="1" width="1" height="1" fill="#e0e0e0"/><rect x="6" y="3" width="1" height="1" fill="#e0e0e0"/><rect x="8" y="1" width="1" height="1" fill="#e0e0e0"/><rect x="8" y="3" width="1" height="1" fill="#e0e0e0"/><rect x="10" y="1" width="1" height="1" fill="#e0e0e0"/><rect x="10" y="3" width="1" height="1" fill="#e0e0e0"/><rect x="12" y="1" width="1" height="1" fill="#e0e0e0"/><rect x="12" y="3" width="1" height="1" fill="#e0e0e0"/></svg><svg style="position:absolute;left:7px;top:218.5px;" width="18" height="18" viewBox="0 0 18 18"><path d="M6 3 H10 V14 H6 L3 8.5Z" fill="#e01010"/><path d="M10 3 H12 L15 8.5 L12 14 H10Z" fill="#1010c0"/><path d="M6 3 H12 L15 8.5 L12 14 H6 L3 8.5Z" stroke="#101060" stroke-width="0.8" fill="none"/><circle cx="9" cy="8.5" r="2.5" fill="#30d030"/><rect x="14" y="7.5" width="4" height="2" fill="#1010c0"/></svg><svg style="position:absolute;left:7px;top:240.44px;" width="18" height="18" viewBox="0 0 18 18"><rect x="3" y="2" width="13" height="13" stroke="#18a8e0" stroke-width="2" fill="none"/><path d="M9.5 2V15M3 8.5H16" stroke="#18a8e0" stroke-width="1.6"/><path d="M1.5 13V16.5H5" stroke="#e01010" stroke-width="1.5" fill="none"/></svg><svg style="position:absolute;left:7px;top:262.38px;" width="18" height="18" viewBox="0 0 18 18"><path d="M1 1.5H17M1 16.5H17M4.5 1.5V16.5M11 1.5V16.5M11 5.5L15 8L11 10.5M11 10L15 12.5L11 15M15 5V16" stroke="#18a8e0" stroke-width="1.3" fill="none"/></svg><svg style="position:absolute;left:7px;top:284.32px;" width="18" height="18" viewBox="0 0 18 18"><circle cx="5" cy="13" r="2.5" fill="#18a8e0"/><circle cx="14" cy="5" r="2.8" fill="#18a8e0"/><path d="M7 11 L12 7" stroke="#18a8e0" stroke-dasharray="1.5 1.5"/></svg><svg style="position:absolute;left:7px;top:306.26px;" width="18" height="18" viewBox="0 0 18 18"><circle cx="6" cy="9" r="4" stroke="#18a8e0" stroke-width="1.5" fill="none"/><path d="M2 9H17M10 6.5H17M10 11.5H17" stroke="#18a8e0" stroke-width="1.2" stroke-dasharray="2 1"/></svg><svg style="position:absolute;left:7px;top:328.2px;" width="18" height="18" viewBox="0 0 18 18"><rect x="3" y="3" width="12" height="12" stroke="#000" stroke-width="4.5" fill="none"/><rect x="3" y="3" width="12" height="12" stroke="#e8e8e8" stroke-width="2" fill="none"/><rect x="13" y="2" width="3" height="3" fill="#e01010"/><rect x="2" y="13" width="3" height="3" fill="#e01010"/></svg><svg style="position:absolute;left:7px;top:350.14px;" width="18" height="18" viewBox="0 0 18 18"><path d="M2 3V9H14V15" stroke="#000" stroke-width="4" fill="none"/><path d="M2 3V9H14V15" stroke="#e8e8e8" stroke-width="2" fill="none"/><rect x="0.5" y="1.5" width="3" height="3" fill="#e01010"/><rect x="12.5" y="13.5" width="3" height="3" fill="#e01010"/></svg><svg style="position:absolute;left:7px;top:372.08000000000004px;" width="18" height="18" viewBox="0 0 18 18"><path d="M3 2V15H15V2H3" stroke="#000" stroke-width="4" fill="none"/><path d="M3 3V14H15V3H3" stroke="#e8e8e8" stroke-width="2" fill="none"/><rect x="6" y="11" width="6" height="6" stroke="#e01010" stroke-width="1.5" fill="none"/></svg><svg style="position:absolute;left:7px;top:394.02px;" width="18" height="18" viewBox="0 0 18 18"><rect x="1" y="1" width="16" height="16" fill="#000"/><rect x="3" y="3" width="12" height="12" stroke="#e8e8e8" stroke-width="2" fill="none"/><path d="M6 7H12M6 11H12" stroke="#e8e8e8" stroke-width="1.5"/><rect x="12" y="6" width="3" height="6" fill="#e01010"/></svg><svg style="position:absolute;left:7px;top:415.96000000000004px;" width="18" height="18" viewBox="0 0 18 18"><path d="M6 2H3V16H6M12 2H15V16H12" stroke="#e8e8e8" stroke-width="2.5" fill="none"/></svg><svg style="position:absolute;left:7px;top:437.9px;" width="18" height="18" viewBox="0 0 18 18"><path d="M4 14 L13 3 L16 6 L7 16Z" fill="#f0c090"/><path d="M4 14 L7 16 L3 17Z" fill="#e8e8e8"/><path d="M13 3 L16 6 L17 4 L15 2Z" fill="#e06060"/><path d="M1 17H17" stroke="#18a8e0" stroke-width="1"/></svg><svg style="position:absolute;left:7px;top:459.84000000000003px;" width="18" height="18" viewBox="0 0 18 18"><path d="M9 1V17M1 9H17" stroke="#e8e8e8" stroke-width="2"/><path d="M9 0L12 4H6Z M9 18L12 14H6Z M0 9L4 6V12Z M18 9L14 6V12Z" fill="#e8e8e8"/></svg><svg style="position:absolute;left:7px;top:481.78000000000003px;" width="18" height="18" viewBox="0 0 18 18"><circle cx="5" cy="4" r="3" stroke="#e8e8e8" stroke-width="1.3" fill="none"/><path d="M9 4H13V9" stroke="#e8e8e8" stroke-width="1.5" fill="none"/><circle cx="8" cy="13" r="3.5" stroke="#8cc8f0" stroke-width="1.5" fill="none"/><circle cx="13" cy="13" r="3.5" stroke="#8cc8f0" stroke-width="1.5" fill="none"/></svg><svg style="position:absolute;left:7px;top:503.72px;" width="18" height="18" viewBox="0 0 18 18"><path d="M8 2 L8 16 L1 16Z" stroke="#e8e8e8" stroke-width="1.5" fill="none"/><path d="M10 2 L10 16 L17 16Z" stroke="#8cc8f0" stroke-width="1.5" fill="none"/></svg><svg style="position:absolute;left:7px;top:525.6600000000001px;" width="18" height="18" viewBox="0 0 18 18"><path d="M2 17V9 Q3 2 11 2H17" stroke="#e8e8e8" stroke-width="2" fill="none"/></svg><svg style="position:absolute;left:7px;top:547.6px;" width="18" height="18" viewBox="0 0 18 18"><path d="M14 6 A6.5 6.5 0 1 1 8 3" stroke="#e8e8e8" stroke-width="2" fill="none"/><path d="M7 0 L11 3 L7 6Z" fill="#e8e8e8"/></svg><svg style="position:absolute;left:7px;top:569.54px;" width="18" height="18" viewBox="0 0 18 18"><rect x="2" y="2" width="14" height="14" stroke="#d01010" stroke-width="1.8" fill="none"/><text x="9" y="13" font-size="9" font-weight="bold" fill="#d01010" text-anchor="middle" font-family="Liberation Sans">P</text><circle cx="16" cy="2" r="1.8" fill="#30d030"/><circle cx="2" cy="16" r="1.8" fill="#30d030"/></svg><svg style="position:absolute;left:7px;top:591.48px;" width="18" height="18" viewBox="0 0 18 18"><rect x="2" y="2" width="14" height="14" stroke="#d01010" stroke-width="1.8" fill="none"/><text x="8" y="13" font-size="9" font-weight="bold" fill="#d01010" text-anchor="middle" font-family="Liberation Sans">P</text><circle cx="15" cy="10" r="2.2" fill="#30d030"/></svg><svg style="position:absolute;left:34.5px;top:218.5px;" width="18" height="18" viewBox="0 0 18 18"><path d="M2 13H9" stroke="#e8e8e8" stroke-width="1.5" stroke-dasharray="2 1.5"/><path d="M10 4 A4.5 4.5 0 0 1 10 13" stroke="#e8e8e8" stroke-width="1.5" fill="none"/><rect x="1" y="12" width="2.5" height="2.5" fill="#8cc8f0"/><rect x="9" y="3" width="2.5" height="2.5" fill="#8cc8f0"/><rect x="9" y="12" width="2.5" height="2.5" fill="#8cc8f0"/></svg><svg style="position:absolute;left:34.5px;top:240.44px;" width="18" height="18" viewBox="0 0 18 18"><circle cx="9" cy="9" r="7.5" stroke="#e8e8e8" stroke-width="1.3" fill="none"/><path d="M9 5.5V12.5M5.5 9H12.5" stroke="#8cc8f0" stroke-width="1.3"/></svg><svg style="position:absolute;left:34.5px;top:262.38px;" width="18" height="18" viewBox="0 0 18 18"><path d="M9 1.5 L16.5 7 L13.5 16 H4.5 L1.5 7Z" stroke="#e8e8e8" stroke-width="1.3" fill="none"/><rect x="8" y="8" width="2.5" height="2.5" fill="#8cc8f0"/><rect x="13" y="14.5" width="3" height="3" fill="#8cc8f0"/></svg><svg style="position:absolute;left:34.5px;top:284.32px;" width="18" height="18" viewBox="0 0 18 18"><path d="M2 6 L5 2 H14 V13 L11 16 H2Z" fill="#b8d8f0"/><rect x="2" y="6" width="9" height="10" fill="#70b8e8"/><path d="M16 15V3M14 5L16 2L18 5" stroke="#e8e8e8" stroke-width="1.3" fill="none"/><path d="M1 16H12" stroke="#e8e8e8" stroke-width="1.5"/></svg><svg style="position:absolute;left:34.5px;top:306.26px;" width="18" height="18" viewBox="0 0 18 18"><path d="M1 8 Q9 4 17 8 V14 Q9 10 1 14Z" fill="#70b8e8"/><path d="M2 6 Q9 2 16 6" stroke="#e8e8e8" stroke-width="1.5" fill="none"/><rect x="12" y="10" width="5" height="4" fill="#e8e8e8"/></svg><svg style="position:absolute;left:34.5px;top:328.2px;" width="18" height="18" viewBox="0 0 18 18"><path d="M1 4 H11 L13 7 H9 V12 H1Z" fill="#70b8e8"/><path d="M1 4 L4 1 H13 L11 4Z" fill="#b8d8f0"/><rect x="6" y="9" width="9" height="8" fill="#d0d0d0"/></svg><svg style="position:absolute;left:34.5px;top:350.14px;" width="18" height="18" viewBox="0 0 18 18"><path d="M1 1H17L12 11H6Z" fill="#70b8e8"/><circle cx="9" cy="13" r="4.5" fill="#d8d8d8"/></svg><svg style="position:absolute;left:34.5px;top:372.08000000000004px;" width="18" height="18" viewBox="0 0 18 18"><path d="M1 8 L14 5 H17 V11 L4 14 H1Z" fill="#c8c8c8"/><path d="M1 8 L14 5 H17 L4 8Z" fill="#e8e8e8"/></svg><svg style="position:absolute;left:34.5px;top:394.02px;" width="18" height="18" viewBox="0 0 18 18"><rect x="6" y="1" width="11" height="10" fill="#d0d0d0"/><rect x="1" y="6" width="11" height="11" fill="#70b8e8"/><path d="M1 6 L6 1 H17 L12 6Z" fill="#e8e8e8" opacity=".6"/></svg><svg style="position:absolute;left:34.5px;top:415.96000000000004px;" width="18" height="18" viewBox="0 0 18 18"><rect x="7" y="1" width="10" height="10" fill="#70b8e8"/><rect x="1" y="7" width="10" height="10" fill="#70b8e8"/><path d="M7 1 L9 -1 H19 L17 1Z" fill="#b8d8f0"/><path d="M1 7 L3 5 H11" stroke="#b8d8f0" stroke-width="2"/></svg><svg style="position:absolute;left:34.5px;top:437.9px;" width="18" height="18" viewBox="0 0 18 18"><rect x="6" y="1" width="11" height="11" fill="#d0d0d0"/><rect x="1" y="6" width="11" height="11" fill="#a8a8a8"/><rect x="6" y="6" width="6" height="6" fill="#70b8e8"/></svg><svg style="position:absolute;left:34.5px;top:459.84000000000003px;" width="18" height="18" viewBox="0 0 18 18"><path d="M2 2 L13 12 M16 2 L5 12" stroke="#8cc8f0" stroke-width="1.5"/><circle cx="4" cy="14" r="2.8" stroke="#8cc8f0" stroke-width="1.3" fill="none"/><circle cx="14" cy="14" r="2.8" stroke="#8cc8f0" stroke-width="1.3" fill="none"/></svg><svg style="position:absolute;left:34.5px;top:481.78000000000003px;" width="18" height="18" viewBox="0 0 18 18"><circle cx="8" cy="11" r="6" fill="#e01010"/><circle cx="6" cy="9" r="1.8" fill="#ff8080"/><path d="M11 6 L14 2" stroke="#c08040" stroke-width="1.5"/><circle cx="15" cy="2" r="1.8" fill="#f0a040"/></svg><svg style="position:absolute;left:34.5px;top:503.72px;" width="18" height="18" viewBox="0 0 18 18"><rect x="2" y="5" width="12" height="12" fill="#fff" stroke="#000" stroke-width="1.5"/><rect x="9" y="1" width="8" height="8" stroke="#e01010" stroke-width="1.2" fill="none" stroke-dasharray="2 1"/></svg><svg style="position:absolute;left:34.5px;top:525.6600000000001px;" width="18" height="18" viewBox="0 0 18 18"><path d="M1 5H11M1 9H11M1 13H11" stroke="#e8e8e8" stroke-width="1.2" stroke-dasharray="2 1"/><path d="M15 2V16" stroke="#e8e8e8" stroke-width="1.5"/><path d="M9 7L12 9L9 11" stroke="#8cc8f0" stroke-width="1.3" fill="none"/></svg><svg style="position:absolute;left:34.5px;top:547.6px;" width="18" height="18" viewBox="0 0 18 18"><path d="M1 9H17" stroke="#8cc8f0" stroke-width="1.3" stroke-dasharray="2 1"/><path d="M4 16L14 2" stroke="#30a0e0" stroke-width="1.8"/><path d="M1 9H6" stroke="#a0a0a0" stroke-width="1.5"/></svg><svg style="position:absolute;left:34.5px;top:569.54px;" width="18" height="18" viewBox="0 0 18 18"><circle cx="4" cy="9" r="2" stroke="#e8e8e8" stroke-width="1.3" fill="none"/><path d="M6 9H12" stroke="#e8e8e8" stroke-width="1.3"/><rect x="12" y="6" width="5" height="6" stroke="#f0b080" stroke-width="1.3" fill="none"/></svg><svg style="position:absolute;left:34.5px;top:591.48px;" width="18" height="18" viewBox="0 0 18 18"><rect x="1" y="2" width="16" height="14" fill="#111" stroke="#e8e8e8" stroke-width="1"/><rect x="3" y="4" width="3" height="3" fill="#e8e8e8"/><rect x="7.5" y="4" width="3" height="3" fill="#e8e8e8"/><rect x="12" y="4" width="3" height="3" fill="#e8e8e8"/><rect x="2" y="9" width="14" height="6" fill="#222"/></svg><svg style="position:absolute;left:62.5px;top:218.5px;" width="18" height="18" viewBox="0 0 18 18"><rect x="3" y="1" width="14" height="14" stroke="#18a8e0" stroke-width="2" fill="none"/><path d="M10 1V15M3 8H17" stroke="#18a8e0" stroke-width="1.6"/><path d="M1.5 13V17H5.5" stroke="#e01010" stroke-width="1.5" fill="none"/></svg><svg style="position:absolute;left:62.5px;top:240.44px;" width="18" height="18" viewBox="0 0 18 18"><rect x="4" y="0" width="10" height="9" fill="#000"/><rect x="6" y="2" width="6" height="5" fill="#e01010"/><path d="M9 10 L13 14 H11 V17 H7 V14 H5Z" fill="#000"/></svg><svg style="position:absolute;left:62.5px;top:262.38px;" width="18" height="18" viewBox="0 0 18 18"><path d="M1 7H5V4L9 9L5 14V11H1Z" fill="#000"/><rect x="9" y="3" width="9" height="12" fill="#000"/><rect x="11" y="6" width="5" height="6" fill="#e01010"/></svg><svg style="position:absolute;left:62.5px;top:284.32px;" width="18" height="18" viewBox="0 0 18 18"><rect x="0" y="3" width="9" height="12" fill="#000"/><rect x="2" y="6" width="5" height="6" fill="#e01010"/><path d="M17 7H13V4L9 9L13 14V11H17Z" fill="#000"/></svg><svg style="position:absolute;left:62.5px;top:306.26px;" width="18" height="18" viewBox="0 0 18 18"><path d="M7 1H11V4H14L9 8L4 4H7Z" fill="#000"/><rect x="4" y="8" width="10" height="10" fill="#000"/><rect x="6" y="10" width="6" height="6" fill="#e01010"/></svg><svg style="position:absolute;left:62.5px;top:328.2px;" width="18" height="18" viewBox="0 0 18 18"><path d="M7 3 H16 V11 H14 L14 12 H5Z" fill="#000"/><rect x="6" y="4" width="9" height="8" fill="#1414f0" transform="skewY(-5)"/><rect x="1" y="13" width="4" height="4" fill="#000"/><rect x="2" y="14" width="2" height="2" fill="#e01010"/></svg><svg style="position:absolute;left:62.5px;top:350.14px;" width="18" height="18" viewBox="0 0 18 18"><path d="M4 4 L10 1 L10 14 L4 17Z" fill="#000"/><path d="M5 5 L9 2.5 V13 L5 15.5Z" fill="#1414f0"/><path d="M3 5 L5 4 V16 L3 17Z" fill="#fff"/><rect x="12" y="11" width="6" height="6" fill="#000"/><rect x="13.5" y="12.5" width="3" height="3" fill="#e01010"/></svg><svg style="position:absolute;left:62.5px;top:372.08000000000004px;" width="18" height="18" viewBox="0 0 18 18"><rect x="0" y="0" width="5" height="5" fill="#000"/><rect x="1.2" y="1.2" width="2.6" height="2.6" fill="#e01010"/><path d="M9 6 L16 2 V14 L9 18Z" fill="#000"/><path d="M10 7 L15 4 V13 L10 16Z" fill="#1414f0"/><path d="M8 7 L10 6 V17 L8 18Z" fill="#fff"/></svg><svg style="position:absolute;left:62.5px;top:394.02px;" width="18" height="18" viewBox="0 0 18 18"><path d="M4 4 L10 1 L10 14 L4 17Z" fill="#000"/><path d="M5 5 L9 2.5 V13 L5 15.5Z" fill="#1414f0"/><path d="M3 5 L5 4 V16 L3 17Z" fill="#fff"/><rect x="13" y="0" width="5" height="5" fill="#000"/><rect x="14" y="1" width="3" height="3" fill="#e01010"/></svg><svg style="position:absolute;left:62.5px;top:415.96000000000004px;" width="18" height="18" viewBox="0 0 18 18"><rect x="1" y="1" width="14" height="14" stroke="#e8e8e8" stroke-width="1.3" fill="none"/><circle cx="11" cy="11" r="3" stroke="#e8e8e8" stroke-width="1.3" fill="#3b4453"/><path d="M13 13 L17 17" stroke="#e8e8e8" stroke-width="1.5"/></svg><svg style="position:absolute;left:62.5px;top:437.9px;" width="18" height="18" viewBox="0 0 18 18"><path d="M1 2V17M17 2V17M1 3H17" stroke="#e8e8e8" stroke-width="1.2"/><path d="M10 5 L6 10 H9 L7 15 L12 9 H9Z" fill="#f0c040"/></svg><svg style="position:absolute;left:62.5px;top:459.84000000000003px;" width="18" height="18" viewBox="0 0 18 18"><rect x="1" y="8" width="16" height="3" fill="#2a6a3a"/><rect x="4" y="5" width="10" height="3" fill="#2a6a3a"/><path d="M2 11V16M16 11V16" stroke="#2a6a3a" stroke-width="2"/></svg><svg style="position:absolute;left:62.5px;top:481.78000000000003px;" width="18" height="18" viewBox="0 0 18 18"><ellipse cx="9" cy="9" rx="4" ry="7.5" stroke="#e8e8e8" stroke-width="1.3" fill="none"/><path d="M1 9 Q9 4 17 9" stroke="#e8e8e8" stroke-width="1.3" fill="none"/><circle cx="9" cy="9" r="2" fill="#8cc8f0"/></svg><svg style="position:absolute;left:62.5px;top:503.72px;" width="18" height="18" viewBox="0 0 18 18"><circle cx="9" cy="8" r="7" fill="#d8d8d8"/><circle cx="7" cy="6" r="3" fill="#f8f8f8"/><path d="M2 16 H16" stroke="#555" stroke-width="1"/></svg><svg style="position:absolute;left:62.5px;top:525.6600000000001px;" width="18" height="18" viewBox="0 0 18 18"><path d="M2 6 L6 2 H16 V12 L12 16 H2Z M2 6 H12 V16 M12 6 L16 2" stroke="#60b0f0" stroke-width="1.6" fill="none"/><path d="M6 12 L9 9" stroke="#60b0f0"/></svg><svg style="position:absolute;left:62.5px;top:547.6px;" width="18" height="18" viewBox="0 0 18 18"><path d="M1 5 H5 L7 2 H11 L13 5 H17 V16 H1Z" fill="#000"/><circle cx="9" cy="10" r="4" fill="#3050c0"/><circle cx="9" cy="10" r="2.2" fill="#000"/><rect x="1" y="4.5" width="16" height="1" fill="#fff"/></svg><svg style="position:absolute;left:62.5px;top:569.54px;" width="18" height="18" viewBox="0 0 18 18"><path d="M1 9 L9 5 L17 9 V13 L9 17 L1 13Z" fill="#d0d0d0"/><path d="M1 9 L9 13 L17 9 L9 5Z" fill="#f0f0f0"/><ellipse cx="9" cy="6" rx="4.5" ry="3" fill="#70b8e8"/><rect x="4.5" y="2" width="9" height="4" fill="#70b8e8"/><ellipse cx="9" cy="2.5" rx="4.5" ry="2" fill="#a8d4f0"/></svg><svg style="position:absolute;left:62.5px;top:591.48px;" width="18" height="18" viewBox="0 0 18 18"><rect x="1" y="1" width="15" height="15" stroke="#e8e8e8" stroke-width="1.3" fill="none"/><circle cx="7" cy="8" r="3.5" stroke="#e8e8e8" stroke-width="1.2" fill="#6a7080"/><path d="M9 13 H15 M13 11 L15 13 L13 15" stroke="#60b0f0" stroke-width="1.5" fill="none"/><path d="M10 14 Q12 18 16 15" stroke="#60b0f0" stroke-width="1.3" fill="none"/></svg><svg style="position:absolute;left:90.5px;top:218.5px;" width="18" height="18" viewBox="0 0 18 18"><text x="9" y="16" font-size="11" font-weight="bold" fill="#18a8e0" text-anchor="middle" font-family="Liberation Sans" letter-spacing="-0.6">100</text><rect x="2.5" y="1.0" width="1.3" height="1.3" fill="#18a8e0"/><rect x="2.5" y="3.5" width="1.3" height="1.3" fill="#18a8e0"/><rect x="5.3" y="1.0" width="1.3" height="1.3" fill="#18a8e0"/><rect x="5.3" y="3.5" width="1.3" height="1.3" fill="#18a8e0"/><rect x="8.1" y="1.0" width="1.3" height="1.3" fill="#18a8e0"/><rect x="8.1" y="3.5" width="1.3" height="1.3" fill="#18a8e0"/><rect x="10.9" y="1.0" width="1.3" height="1.3" fill="#18a8e0"/><rect x="10.9" y="3.5" width="1.3" height="1.3" fill="#18a8e0"/><rect x="13.7" y="1.0" width="1.3" height="1.3" fill="#18a8e0"/><rect x="13.7" y="3.5" width="1.3" height="1.3" fill="#18a8e0"/></svg><svg style="position:absolute;left:90.5px;top:240.44px;" width="18" height="18" viewBox="0 0 18 18"><path d="M7 2 L4 14 H17 M7 2 L11 8" stroke="#18a8e0" stroke-width="1.2" stroke-dasharray="2 1" fill="none"/><path d="M1 15H17" stroke="#18a8e0" stroke-width="1.5"/><circle cx="7" cy="2" r="1.5" fill="#e01010"/><circle cx="17" cy="15" r="1.5" fill="#e01010"/></svg><svg style="position:absolute;left:90.5px;top:262.38px;" width="18" height="18" viewBox="0 0 18 18"><path d="M4 14 L14 4" stroke="#e8e8e8" stroke-width="1.2"/><rect x="1.5" y="11.5" width="5" height="5" stroke="#f0b080" stroke-width="1.3" fill="#3b4453"/><rect x="11.5" y="1.5" width="5" height="5" stroke="#f0b080" stroke-width="1.3" fill="#3b4453"/></svg><svg style="position:absolute;left:90.5px;top:284.32px;" width="18" height="18" viewBox="0 0 18 18"><path d="M2 16 L16 2" stroke="#e8e8e8" stroke-width="1.2"/><rect x="6.5" y="6.5" width="5" height="5" stroke="#f0b080" stroke-width="1.3" fill="#3b4453"/></svg><svg style="position:absolute;left:90.5px;top:306.26px;" width="18" height="18" viewBox="0 0 18 18"><path d="M2 2 L16 16 M16 2 L2 16" stroke="#e8e8e8" stroke-width="1.2"/><rect x="6.5" y="6.5" width="5" height="5" stroke="#f0b080" stroke-width="1.3" fill="#3b4453"/></svg><svg style="position:absolute;left:90.5px;top:328.2px;" width="18" height="18" viewBox="0 0 18 18"><circle cx="9" cy="9" r="7.5" stroke="#e8e8e8" stroke-width="1.2" fill="none"/><rect x="7" y="7" width="4" height="4" stroke="#f0b080" stroke-width="1.2" fill="none"/></svg><svg style="position:absolute;left:90.5px;top:350.14px;" width="18" height="18" viewBox="0 0 18 18"><path d="M9 1V14M1 14H17" stroke="#e8e8e8" stroke-width="1.2"/><rect x="6.5" y="11.5" width="5" height="5" stroke="#f0b080" stroke-width="1.3" fill="#3b4453"/></svg><svg style="position:absolute;left:90.5px;top:372.08000000000004px;" width="18" height="18" viewBox="0 0 18 18"><circle cx="9" cy="9" r="6.5" stroke="#e8e8e8" stroke-width="1" fill="none"/><rect x="6.5" y="0.5" width="5" height="4" stroke="#f0b080" stroke-width="1.3" fill="#3b4453"/><rect x="6.5" y="13.5" width="5" height="4" stroke="#f0b080" stroke-width="1.3" fill="#3b4453"/><rect x="0.5" y="6.5" width="4" height="5" stroke="#f0b080" stroke-width="1.3" fill="#3b4453"/><rect x="13.5" y="6.5" width="4" height="5" stroke="#f0b080" stroke-width="1.3" fill="#3b4453"/></svg><svg style="position:absolute;left:90.5px;top:394.02px;" width="18" height="18" viewBox="0 0 18 18"><rect x="7" y="7" width="4" height="4" stroke="#f0b080" stroke-width="1.2" fill="none"/></svg><svg style="position:absolute;left:90.5px;top:415.96000000000004px;" width="18" height="18" viewBox="0 0 18 18"><path d="M2 2V16M16 2V16M2 6H16" stroke="#8cc8f0" stroke-width="1.3"/><path d="M2 6L5 4V8Z M16 6L13 4V8Z" fill="#8cc8f0"/></svg><svg style="position:absolute;left:90.5px;top:437.9px;" width="18" height="18" viewBox="0 0 18 18"><path d="M2 3V8M16 3V8M2 5H16" stroke="#e8e8e8" stroke-width="1.2"/><rect x="1" y="9" width="16" height="7" fill="#f0c040"/><path d="M4 9V12M7 9V11M10 9V12M13 9V11" stroke="#3b4453"/></svg><svg style="position:absolute;left:90.5px;top:459.84000000000003px;" width="18" height="18" viewBox="0 0 18 18"><rect x="1" y="2" width="16" height="14" fill="#000"/><rect x="2.5" y="3.5" width="13" height="10" fill="#fff"/><rect x="4" y="5" width="10" height="7" stroke="#e01010" stroke-width="1.8" fill="#fff"/></svg><svg style="position:absolute;left:90.5px;top:481.78000000000003px;" width="18" height="18" viewBox="0 0 18 18"><path d="M2 6 L9 2 L16 6 V13 L9 17 L2 13Z" fill="#1a90e0"/><path d="M2 6 L9 10 L16 6 L9 2Z" fill="#60c0f8"/><path d="M9 10 V17 L16 13 V6Z" fill="#1060b0"/><circle cx="3" cy="5" r="2.2" fill="#e01010"/></svg><svg style="position:absolute;left:90.5px;top:503.72px;" width="18" height="18" viewBox="0 0 18 18"><rect x="1" y="1" width="16" height="16" fill="#000"/><path d="M1 8H17M9 1V17" stroke="#fff" stroke-width="1.5"/><rect x="1" y="1" width="16" height="16" stroke="#fff" stroke-width="1" fill="none"/></svg><svg style="position:absolute;left:90.5px;top:525.6600000000001px;" width="18" height="18" viewBox="0 0 18 18"><path d="M3 4 H12 L16 8 V17 H3Z" fill="#d0d0d0"/><path d="M1 4H8M5 1L8 4L5 7" stroke="#30a0e0" stroke-width="1.6" fill="none"/><rect x="3" y="11" width="13" height="5" fill="#333"/><text x="9.5" y="15.5" font-size="5" font-weight="bold" fill="#fff" text-anchor="middle" font-family="Liberation Sans">WMF</text></svg><svg style="position:absolute;left:90.5px;top:547.6px;" width="18" height="18" viewBox="0 0 18 18"><rect x="2" y="1" width="14" height="16" fill="#e0e0e0"/><rect x="2" y="1" width="14" height="4" fill="#333"/><circle cx="9" cy="11" r="4.5" fill="#f0a030"/><circle cx="9" cy="11" r="2" fill="#fff"/></svg><svg style="position:absolute;left:90.5px;top:569.54px;" width="18" height="18" viewBox="0 0 18 18"><rect x="1" y="1" width="16" height="16" fill="#fff" stroke="#333" stroke-width="1"/><rect x="4" y="3" width="11" height="12" fill="#80b8e0"/><path d="M4 3 H12 L15 6" fill="#fff" stroke="#333" stroke-width="0.6"/></svg><svg style="position:absolute;left:90.5px;top:591.48px;" width="18" height="18" viewBox="0 0 18 18"><rect x="4" y="1" width="13" height="9" fill="#d0d0d0" stroke="#333" stroke-width="0.8"/><rect x="9" y="3" width="7" height="5" fill="#e03030"/><rect x="1" y="7" width="12" height="9" fill="#a0a0a0" stroke="#333" stroke-width="0.8"/><rect x="3" y="10" width="8" height="5" fill="#308030"/></svg>
<svg style="position:absolute;left:277px;top:210px" width="688" height="487" shape-rendering="crispEdges"><rect x="5" y="0" width="1" height="487" fill="#164416"/><rect x="10" y="0" width="1" height="487" fill="#164416"/><rect x="15" y="0" width="1" height="487" fill="#164416"/><rect x="20" y="0" width="1" height="487" fill="#164416"/><rect x="29" y="0" width="1" height="487" fill="#164416"/><rect x="34" y="0" width="1" height="487" fill="#164416"/><rect x="39" y="0" width="1" height="487" fill="#164416"/><rect x="44" y="0" width="1" height="487" fill="#164416"/><rect x="54" y="0" width="1" height="487" fill="#164416"/><rect x="59" y="0" width="1" height="487" fill="#164416"/><rect x="64" y="0" width="1" height="487" fill="#164416"/><rect x="69" y="0" width="1" height="487" fill="#164416"/><rect x="78" y="0" width="1" height="487" fill="#164416"/><rect x="83" y="0" width="1" height="487" fill="#164416"/><rect x="88" y="0" width="1" height="487" fill="#164416"/><rect x="93" y="0" width="1" height="487" fill="#164416"/><rect x="103" y="0" width="1" height="487" fill="#164416"/><rect x="108" y="0" width="1" height="487" fill="#164416"/><rect x="113" y="0" width="1" height="487" fill="#164416"/><rect x="118" y="0" width="1" height="487" fill="#164416"/><rect x="128" y="0" width="1" height="487" fill="#164416"/><rect x="132" y="0" width="1" height="487" fill="#164416"/><rect x="137" y="0" width="1" height="487" fill="#164416"/><rect x="142" y="0" width="1" height="487" fill="#164416"/><rect x="152" y="0" width="1" height="487" fill="#164416"/><rect x="157" y="0" width="1" height="487" fill="#164416"/><rect x="162" y="0" width="1" height="487" fill="#164416"/><rect x="167" y="0" width="1" height="487" fill="#164416"/><rect x="177" y="0" width="1" height="487" fill="#164416"/><rect x="181" y="0" width="1" height="487" fill="#164416"/><rect x="186" y="0" width="1" height="487" fill="#164416"/><rect x="191" y="0" width="1" height="487" fill="#164416"/><rect x="201" y="0" width="1" height="487" fill="#164416"/><rect x="206" y="0" width="1" height="487" fill="#164416"/><rect x="211" y="0" width="1" height="487" fill="#164416"/><rect x="216" y="0" width="1" height="487" fill="#164416"/><rect x="226" y="0" width="1" height="487" fill="#164416"/><rect x="231" y="0" width="1" height="487" fill="#164416"/><rect x="235" y="0" width="1" height="487" fill="#164416"/><rect x="240" y="0" width="1" height="487" fill="#164416"/><rect x="250" y="0" width="1" height="487" fill="#164416"/><rect x="255" y="0" width="1" height="487" fill="#164416"/><rect x="260" y="0" width="1" height="487" fill="#164416"/><rect x="265" y="0" width="1" height="487" fill="#164416"/><rect x="275" y="0" width="1" height="487" fill="#164416"/><rect x="280" y="0" width="1" height="487" fill="#164416"/><rect x="285" y="0" width="1" height="487" fill="#164416"/><rect x="289" y="0" width="1" height="487" fill="#164416"/><rect x="299" y="0" width="1" height="487" fill="#164416"/><rect x="304" y="0" width="1" height="487" fill="#164416"/><rect x="309" y="0" width="1" height="487" fill="#164416"/><rect x="314" y="0" width="1" height="487" fill="#164416"/><rect x="324" y="0" width="1" height="487" fill="#164416"/><rect x="329" y="0" width="1" height="487" fill="#164416"/><rect x="334" y="0" width="1" height="487" fill="#164416"/><rect x="339" y="0" width="1" height="487" fill="#164416"/><rect x="348" y="0" width="1" height="487" fill="#164416"/><rect x="353" y="0" width="1" height="487" fill="#164416"/><rect x="358" y="0" width="1" height="487" fill="#164416"/><rect x="363" y="0" width="1" height="487" fill="#164416"/><rect x="373" y="0" width="1" height="487" fill="#164416"/><rect x="378" y="0" width="1" height="487" fill="#164416"/><rect x="383" y="0" width="1" height="487" fill="#164416"/><rect x="388" y="0" width="1" height="487" fill="#164416"/><rect x="397" y="0" width="1" height="487" fill="#164416"/><rect x="402" y="0" width="1" height="487" fill="#164416"/><rect x="407" y="0" width="1" height="487" fill="#164416"/><rect x="412" y="0" width="1" height="487" fill="#164416"/><rect x="422" y="0" width="1" height="487" fill="#164416"/><rect x="427" y="0" width="1" height="487" fill="#164416"/><rect x="432" y="0" width="1" height="487" fill="#164416"/><rect x="437" y="0" width="1" height="487" fill="#164416"/><rect x="447" y="0" width="1" height="487" fill="#164416"/><rect x="451" y="0" width="1" height="487" fill="#164416"/><rect x="456" y="0" width="1" height="487" fill="#164416"/><rect x="461" y="0" width="1" height="487" fill="#164416"/><rect x="471" y="0" width="1" height="487" fill="#164416"/><rect x="476" y="0" width="1" height="487" fill="#164416"/><rect x="481" y="0" width="1" height="487" fill="#164416"/><rect x="486" y="0" width="1" height="487" fill="#164416"/><rect x="496" y="0" width="1" height="487" fill="#164416"/><rect x="501" y="0" width="1" height="487" fill="#164416"/><rect x="505" y="0" width="1" height="487" fill="#164416"/><rect x="510" y="0" width="1" height="487" fill="#164416"/><rect x="520" y="0" width="1" height="487" fill="#164416"/><rect x="525" y="0" width="1" height="487" fill="#164416"/><rect x="530" y="0" width="1" height="487" fill="#164416"/><rect x="535" y="0" width="1" height="487" fill="#164416"/><rect x="545" y="0" width="1" height="487" fill="#164416"/><rect x="550" y="0" width="1" height="487" fill="#164416"/><rect x="555" y="0" width="1" height="487" fill="#164416"/><rect x="559" y="0" width="1" height="487" fill="#164416"/><rect x="569" y="0" width="1" height="487" fill="#164416"/><rect x="574" y="0" width="1" height="487" fill="#164416"/><rect x="579" y="0" width="1" height="487" fill="#164416"/><rect x="584" y="0" width="1" height="487" fill="#164416"/><rect x="594" y="0" width="1" height="487" fill="#164416"/><rect x="599" y="0" width="1" height="487" fill="#164416"/><rect x="604" y="0" width="1" height="487" fill="#164416"/><rect x="608" y="0" width="1" height="487" fill="#164416"/><rect x="618" y="0" width="1" height="487" fill="#164416"/><rect x="623" y="0" width="1" height="487" fill="#164416"/><rect x="628" y="0" width="1" height="487" fill="#164416"/><rect x="633" y="0" width="1" height="487" fill="#164416"/><rect x="643" y="0" width="1" height="487" fill="#164416"/><rect x="648" y="0" width="1" height="487" fill="#164416"/><rect x="653" y="0" width="1" height="487" fill="#164416"/><rect x="658" y="0" width="1" height="487" fill="#164416"/><rect x="667" y="0" width="1" height="487" fill="#164416"/><rect x="672" y="0" width="1" height="487" fill="#164416"/><rect x="677" y="0" width="1" height="487" fill="#164416"/><rect x="682" y="0" width="1" height="487" fill="#164416"/><rect x="0" y="481" width="688" height="1" fill="#521e1e"/><rect x="0" y="476" width="688" height="1" fill="#521e1e"/><rect x="0" y="471" width="688" height="1" fill="#521e1e"/><rect x="0" y="466" width="688" height="1" fill="#521e1e"/><rect x="0" y="456" width="688" height="1" fill="#521e1e"/><rect x="0" y="452" width="688" height="1" fill="#521e1e"/><rect x="0" y="447" width="688" height="1" fill="#521e1e"/><rect x="0" y="442" width="688" height="1" fill="#521e1e"/><rect x="0" y="432" width="688" height="1" fill="#521e1e"/><rect x="0" y="427" width="688" height="1" fill="#521e1e"/><rect x="0" y="422" width="688" height="1" fill="#521e1e"/><rect x="0" y="417" width="688" height="1" fill="#521e1e"/><rect x="0" y="407" width="688" height="1" fill="#521e1e"/><rect x="0" y="403" width="688" height="1" fill="#521e1e"/><rect x="0" y="398" width="688" height="1" fill="#521e1e"/><rect x="0" y="393" width="688" height="1" fill="#521e1e"/><rect x="0" y="383" width="688" height="1" fill="#521e1e"/><rect x="0" y="378" width="688" height="1" fill="#521e1e"/><rect x="0" y="373" width="688" height="1" fill="#521e1e"/><rect x="0" y="368" width="688" height="1" fill="#521e1e"/><rect x="0" y="358" width="688" height="1" fill="#521e1e"/><rect x="0" y="353" width="688" height="1" fill="#521e1e"/><rect x="0" y="349" width="688" height="1" fill="#521e1e"/><rect x="0" y="344" width="688" height="1" fill="#521e1e"/><rect x="0" y="334" width="688" height="1" fill="#521e1e"/><rect x="0" y="329" width="688" height="1" fill="#521e1e"/><rect x="0" y="324" width="688" height="1" fill="#521e1e"/><rect x="0" y="319" width="688" height="1" fill="#521e1e"/><rect x="0" y="309" width="688" height="1" fill="#521e1e"/><rect x="0" y="304" width="688" height="1" fill="#521e1e"/><rect x="0" y="300" width="688" height="1" fill="#521e1e"/><rect x="0" y="295" width="688" height="1" fill="#521e1e"/><rect x="0" y="285" width="688" height="1" fill="#521e1e"/><rect x="0" y="280" width="688" height="1" fill="#521e1e"/><rect x="0" y="275" width="688" height="1" fill="#521e1e"/><rect x="0" y="270" width="688" height="1" fill="#521e1e"/><rect x="0" y="260" width="688" height="1" fill="#521e1e"/><rect x="0" y="255" width="688" height="1" fill="#521e1e"/><rect x="0" y="250" width="688" height="1" fill="#521e1e"/><rect x="0" y="246" width="688" height="1" fill="#521e1e"/><rect x="0" y="236" width="688" height="1" fill="#521e1e"/><rect x="0" y="231" width="688" height="1" fill="#521e1e"/><rect x="0" y="226" width="688" height="1" fill="#521e1e"/><rect x="0" y="221" width="688" height="1" fill="#521e1e"/><rect x="0" y="211" width="688" height="1" fill="#521e1e"/><rect x="0" y="206" width="688" height="1" fill="#521e1e"/><rect x="0" y="201" width="688" height="1" fill="#521e1e"/><rect x="0" y="197" width="688" height="1" fill="#521e1e"/><rect x="0" y="187" width="688" height="1" fill="#521e1e"/><rect x="0" y="182" width="688" height="1" fill="#521e1e"/><rect x="0" y="177" width="688" height="1" fill="#521e1e"/><rect x="0" y="172" width="688" height="1" fill="#521e1e"/><rect x="0" y="162" width="688" height="1" fill="#521e1e"/><rect x="0" y="157" width="688" height="1" fill="#521e1e"/><rect x="0" y="152" width="688" height="1" fill="#521e1e"/><rect x="0" y="147" width="688" height="1" fill="#521e1e"/><rect x="0" y="138" width="688" height="1" fill="#521e1e"/><rect x="0" y="133" width="688" height="1" fill="#521e1e"/><rect x="0" y="128" width="688" height="1" fill="#521e1e"/><rect x="0" y="123" width="688" height="1" fill="#521e1e"/><rect x="0" y="113" width="688" height="1" fill="#521e1e"/><rect x="0" y="108" width="688" height="1" fill="#521e1e"/><rect x="0" y="103" width="688" height="1" fill="#521e1e"/><rect x="0" y="98" width="688" height="1" fill="#521e1e"/><rect x="0" y="89" width="688" height="1" fill="#521e1e"/><rect x="0" y="84" width="688" height="1" fill="#521e1e"/><rect x="0" y="79" width="688" height="1" fill="#521e1e"/><rect x="0" y="74" width="688" height="1" fill="#521e1e"/><rect x="0" y="64" width="688" height="1" fill="#521e1e"/><rect x="0" y="59" width="688" height="1" fill="#521e1e"/><rect x="0" y="54" width="688" height="1" fill="#521e1e"/><rect x="0" y="49" width="688" height="1" fill="#521e1e"/><rect x="0" y="40" width="688" height="1" fill="#521e1e"/><rect x="0" y="35" width="688" height="1" fill="#521e1e"/><rect x="0" y="30" width="688" height="1" fill="#521e1e"/><rect x="0" y="25" width="688" height="1" fill="#521e1e"/><rect x="0" y="15" width="688" height="1" fill="#521e1e"/><rect x="0" y="10" width="688" height="1" fill="#521e1e"/><rect x="0" y="5" width="688" height="1" fill="#521e1e"/><rect x="0" y="0" width="1" height="487" fill="#58925a"/><rect x="24" y="0" width="1" height="487" fill="#58925a"/><rect x="49" y="0" width="1" height="487" fill="#58925a"/><rect x="74" y="0" width="1" height="487" fill="#58925a"/><rect x="98" y="0" width="1" height="487" fill="#58925a"/><rect x="123" y="0" width="1" height="487" fill="#58925a"/><rect x="147" y="0" width="1" height="487" fill="#58925a"/><rect x="172" y="0" width="1" height="487" fill="#58925a"/><rect x="196" y="0" width="1" height="487" fill="#58925a"/><rect x="221" y="0" width="1" height="487" fill="#58925a"/><rect x="245" y="0" width="1" height="487" fill="#58925a"/><rect x="270" y="0" width="1" height="487" fill="#58925a"/><rect x="294" y="0" width="1" height="487" fill="#58925a"/><rect x="319" y="0" width="1" height="487" fill="#58925a"/><rect x="343" y="0" width="1" height="487" fill="#58925a"/><rect x="368" y="0" width="1" height="487" fill="#58925a"/><rect x="393" y="0" width="1" height="487" fill="#58925a"/><rect x="417" y="0" width="1" height="487" fill="#58925a"/><rect x="442" y="0" width="1" height="487" fill="#58925a"/><rect x="466" y="0" width="1" height="487" fill="#58925a"/><rect x="491" y="0" width="1" height="487" fill="#58925a"/><rect x="515" y="0" width="1" height="487" fill="#58925a"/><rect x="540" y="0" width="1" height="487" fill="#58925a"/><rect x="564" y="0" width="1" height="487" fill="#58925a"/><rect x="589" y="0" width="1" height="487" fill="#58925a"/><rect x="613" y="0" width="1" height="487" fill="#58925a"/><rect x="638" y="0" width="1" height="487" fill="#58925a"/><rect x="662" y="0" width="1" height="487" fill="#58925a"/><rect x="687" y="0" width="1" height="487" fill="#58925a"/><rect x="0" y="486" width="688" height="1" fill="#885a5a"/><rect x="0" y="461" width="688" height="1" fill="#885a5a"/><rect x="0" y="437" width="688" height="1" fill="#885a5a"/><rect x="0" y="412" width="688" height="1" fill="#885a5a"/><rect x="0" y="388" width="688" height="1" fill="#885a5a"/><rect x="0" y="363" width="688" height="1" fill="#885a5a"/><rect x="0" y="339" width="688" height="1" fill="#885a5a"/><rect x="0" y="314" width="688" height="1" fill="#885a5a"/><rect x="0" y="290" width="688" height="1" fill="#885a5a"/><rect x="0" y="265" width="688" height="1" fill="#885a5a"/><rect x="0" y="241" width="688" height="1" fill="#885a5a"/><rect x="0" y="216" width="688" height="1" fill="#885a5a"/><rect x="0" y="192" width="688" height="1" fill="#885a5a"/><rect x="0" y="167" width="688" height="1" fill="#885a5a"/><rect x="0" y="143" width="688" height="1" fill="#885a5a"/><rect x="0" y="118" width="688" height="1" fill="#885a5a"/><rect x="0" y="93" width="688" height="1" fill="#885a5a"/><rect x="0" y="69" width="688" height="1" fill="#885a5a"/><rect x="0" y="44" width="688" height="1" fill="#885a5a"/><rect x="0" y="20" width="688" height="1" fill="#885a5a"/><rect x="0" y="0" width="688" height="1" fill="#885a5a"/><rect x="0" y="0" width="1" height="487" fill="#36a036"/><rect x="1" y="486" width="687" height="1" fill="#a83838"/></svg><div style="position:absolute;left:120px;top:212.0px;line-height:16px;font-size:12px;color:#f0f0f0;white-space:nowrap;letter-spacing:0.3px">[−][평면도][2D 와이어프레임]</div><svg style="position:absolute;left:1025.5px;top:221.5px;" width="84" height="84" viewBox="0 0 84 84"><circle cx="42" cy="42" r="36.5" stroke="#3e3e3e" stroke-width="10" fill="none"/></svg><div style="position:absolute;left:1050px;top:246px;width:36px;height:36px;background:#d8d8d8;border:1px solid #a8a8a8"></div><div style="position:absolute;left:1056px;top:253px;width:24px;height:22px;background:#b8bfcc;"></div><div style="position:absolute;left:1048.0px;width:40px;text-align:center;top:258.0px;line-height:12px;font-size:9px;color:#303030;white-space:nowrap;letter-spacing:-0.5px">평면도</div><div style="position:absolute;left:1058.0px;width:20px;text-align:center;top:217.0px;line-height:16px;font-size:13px;color:#a4a4a4;white-space:nowrap;;letter-spacing:0.3px">북</div><div style="position:absolute;left:1058.0px;width:20px;text-align:center;top:295.0px;line-height:16px;font-size:13px;color:#a4a4a4;white-space:nowrap;;letter-spacing:0.3px">남</div><div style="position:absolute;left:1019.5px;width:20px;text-align:center;top:256.0px;line-height:16px;font-size:13px;color:#a4a4a4;white-space:nowrap;;letter-spacing:0.3px">서</div><div style="position:absolute;left:1096.5px;width:20px;text-align:center;top:256.0px;line-height:16px;font-size:13px;color:#a4a4a4;white-space:nowrap;;letter-spacing:0.3px">동</div><svg style="position:absolute;left:1064px;top:237px;" width="8" height="5" viewBox="0 0 8 5"><path d="M0 0H8L4 5Z" fill="#f0f0f0"/></svg><svg style="position:absolute;left:1064px;top:287px;" width="8" height="5" viewBox="0 0 8 5"><path d="M0 5H8L4 0Z" fill="#f0f0f0"/></svg><svg style="position:absolute;left:1041px;top:260px;" width="5" height="8" viewBox="0 0 5 8"><path d="M0 0V8L5 4Z" fill="#f0f0f0"/></svg><svg style="position:absolute;left:1090px;top:260px;" width="5" height="8" viewBox="0 0 5 8"><path d="M5 0V8L0 4Z" fill="#f0f0f0"/></svg><svg style="position:absolute;left:1018px;top:212px;" width="13" height="12" viewBox="0 0 13 12"><path d="M6.5 0.5 L12.5 6 H10.5 V11.5 H2.5 V6 H0.5Z" fill="#7c7c7c"/></svg><svg style="position:absolute;left:1094px;top:210px;" width="28" height="28" viewBox="0 0 28 28"><path d="M3 4 Q14 4 21 14 L23 21" stroke="#6e6e6e" stroke-width="3" fill="none"/><path d="M1 4 L7 0.5 L7 7.5Z" fill="#6e6e6e"/><path d="M18.5 20 L23 27 L26.5 19.5Z" fill="#6e6e6e"/></svg><svg style="position:absolute;left:1109px;top:304px;" width="9" height="6" viewBox="0 0 9 6"><path d="M0 0H9L4.5 5Z" fill="#808080"/><rect x="0" y="0" width="9" height="1" fill="#808080"/></svg><div style="position:absolute;left:1044px;top:325px;width:48px;height:17px;background:#b4b8c8;border-radius:5px;border:1px solid #9094a4"></div><div style="position:absolute;left:1048px;top:326.0px;line-height:15px;font-size:11px;color:#555555;white-space:nowrap;">WCS</div><svg style="position:absolute;left:1078px;top:331px;" width="9" height="6" viewBox="0 0 9 6"><path d="M0.5 0.5 H8.5 L4.5 5.5Z" stroke="#e8e8f0" fill="none"/></svg><svg style="position:absolute;left:1130px;top:212px;" width="10" height="6" viewBox="0 0 10 6"><path d="M0.5 5.5 L5 0.5 L9.5 5.5Z" fill="#6a6a6a"/></svg><svg style="position:absolute;left:1130px;top:688px;" width="10" height="6" viewBox="0 0 10 6"><path d="M0.5 0.5 L5 5.5 L9.5 0.5Z" fill="#6a6a6a"/></svg><div style="position:absolute;left:1132px;top:445px;width:6px;height:17px;background:#8a8a8a;border-radius:3px"></div><div style="position:absolute;left:613px;top:708px;width:17px;height:2px;background:#8a8a8a;border-radius:1px"></div>
<svg style="position:absolute;left:7px;top:727px;" width="19" height="5" viewBox="0 0 19 5"><rect x="0" y="0" width="2" height="2" fill="#e0e0e0"/><rect x="0" y="3" width="2" height="2" fill="#e0e0e0"/><rect x="3" y="0" width="2" height="2" fill="#e0e0e0"/><rect x="3" y="3" width="2" height="2" fill="#e0e0e0"/><rect x="6" y="0" width="2" height="2" fill="#e0e0e0"/><rect x="6" y="3" width="2" height="2" fill="#e0e0e0"/><rect x="9" y="0" width="2" height="2" fill="#e0e0e0"/><rect x="9" y="3" width="2" height="2" fill="#e0e0e0"/><rect x="12" y="0" width="2" height="2" fill="#e0e0e0"/><rect x="12" y="3" width="2" height="2" fill="#e0e0e0"/><rect x="15" y="0" width="2" height="2" fill="#e0e0e0"/><rect x="15" y="3" width="2" height="2" fill="#e0e0e0"/><rect x="18" y="0" width="2" height="2" fill="#e0e0e0"/><rect x="18" y="3" width="2" height="2" fill="#e0e0e0"/></svg><svg style="position:absolute;left:11px;top:739px;" width="10" height="10" viewBox="0 0 10 10"><path d="M1 1 L9 9 M9 1 L1 9" stroke="#e0e0e0" stroke-width="1.6"/></svg><svg style="position:absolute;left:7px;top:760px;" width="17" height="17" viewBox="0 0 17 17"><path d="M2.5 15 L11 6.5" stroke="#d0d0d0" stroke-width="3.2" stroke-linecap="round"/><circle cx="12.5" cy="5" r="4.6" fill="#d0d0d0"/><path d="M12.5 5 L17 0.5" stroke="#2c323d" stroke-width="3.4"/></svg><div style="position:absolute;left:31px;top:728.5px;line-height:13px;font-size:11.8px;color:#000;white-space:nowrap;font-family:'Liberation Mono',monospace">C:\Users\jeffy\AppData\Local\Temp\Drawing1_1_29790_17fcef6a.sv$(으)로 자동 저장 ...</div><div style="position:absolute;left:31px;top:742.5px;line-height:13px;font-size:11.8px;color:#000;white-space:nowrap;font-family:'Liberation Mono',monospace">명령:</div><svg style="position:absolute;left:33px;top:762px;" width="16" height="13" viewBox="0 0 16 13"><rect x="0.5" y="0.5" width="15" height="12" fill="#fff" stroke="#555"/><rect x="0.5" y="0.5" width="15" height="2.5" fill="#555"/><path d="M3 5 L6 7 L3 9 M7 10 H11" stroke="#555" fill="none"/></svg><svg style="position:absolute;left:51.0px;top:766.0px;" width="6" height="4" viewBox="0 0 6 4"><path d="M0 0H6L3.0 4Z" fill="#555"/></svg><div style="position:absolute;left:67px;top:759.75px;line-height:16.5px;font-size:12.5px;color:#909090;white-space:nowrap;font-style:italic;word-spacing:4px;letter-spacing:0.3px">명령 입력</div>
<div style="position:absolute;left:20px;top:790px;width:16px;height:2px;background:#e8e8e8;"></div><div style="position:absolute;left:20px;top:795px;width:16px;height:2px;background:#e8e8e8;"></div><div style="position:absolute;left:20px;top:800px;width:16px;height:2px;background:#e8e8e8;"></div><svg style="position:absolute;left:45px;top:784px;" width="58" height="24" viewBox="0 0 58 24"><path d="M9 0 H58 L49 24 H0Z" fill="#3b4453"/></svg><div style="position:absolute;left:62px;top:788.0px;line-height:16px;font-size:12px;color:#f0f0f0;white-space:nowrap;;letter-spacing:0.3px">모형</div><div style="position:absolute;left:110px;top:788.0px;line-height:16px;font-size:12px;color:#e0e0e0;white-space:nowrap;;letter-spacing:0.3px">배치1</div><svg style="position:absolute;left:148px;top:787px;" width="8" height="18" viewBox="0 0 8 18"><path d="M7 1 L1 17" stroke="#566070"/></svg><div style="position:absolute;left:165px;top:788.0px;line-height:16px;font-size:12px;color:#e0e0e0;white-space:nowrap;;letter-spacing:0.3px">배치2</div><svg style="position:absolute;left:204px;top:787px;" width="8" height="18" viewBox="0 0 8 18"><path d="M7 1 L1 17" stroke="#566070"/></svg><svg style="position:absolute;left:221px;top:788px;" width="17" height="17" viewBox="0 0 17 17"><path d="M8.5 1 V16 M1 8.5 H16" stroke="#e8e8e8" stroke-width="2"/></svg><svg style="position:absolute;left:246px;top:787px;" width="8" height="18" viewBox="0 0 8 18"><path d="M7 1 L1 17" stroke="#566070"/></svg><div style="position:absolute;left:542px;top:786px;width:27px;height:24px;background:#3b4453;"></div><div style="position:absolute;left:572px;top:786px;width:64px;height:24px;background:#3b4453;"></div><div style="position:absolute;left:639px;top:786px;width:103px;height:24px;background:#3b4453;"></div><div style="position:absolute;left:744px;top:786px;width:64px;height:24px;background:#3b4453;"></div><div style="position:absolute;left:811px;top:786px;width:106px;height:24px;background:#3b4453;"></div><div style="position:absolute;left:920px;top:786px;width:83px;height:24px;background:#3b4453;"></div><div style="position:absolute;left:1004px;top:786px;width:24px;height:24px;background:#3b4453;"></div><div style="position:absolute;left:1031px;top:786px;width:23px;height:24px;background:#3b4453;"></div><div style="position:absolute;left:1058px;top:786px;width:30px;height:24px;background:#3b4453;"></div><div style="position:absolute;left:1091px;top:786px;width:22px;height:24px;background:#3b4453;"></div><div style="position:absolute;left:1117px;top:786px;width:24px;height:24px;background:#3b4453;"></div><div style="position:absolute;left:573px;top:787px;width:22px;height:22px;background:#5b8bc3;"></div><div style="position:absolute;left:597px;top:787px;width:22px;height:22px;background:#5b8bc3;"></div><div style="position:absolute;left:640px;top:787px;width:22px;height:22px;background:#5b8bc3;"></div><div style="position:absolute;left:745px;top:787px;width:22px;height:22px;background:#5b8bc3;"></div><div style="position:absolute;left:812px;top:787px;width:22px;height:22px;background:#5b8bc3;"></div><div style="position:absolute;left:544px;top:789.5px;line-height:16px;font-size:12px;color:#f0f0f0;white-space:nowrap;;letter-spacing:0.3px">모형</div><svg style="position:absolute;left:576px;top:790px;" width="16" height="16" viewBox="0 0 16 16"><path d="M1 4.5H15M1 8H15M1 11.5H15M4.5 1V15M8 1V15M11.5 1V15" stroke="#fff" stroke-width="1.2"/></svg><svg style="position:absolute;left:600px;top:790px;" width="16" height="16" viewBox="0 0 16 16"><rect x="2.0" y="2.0" width="2" height="2" fill="#fff"/><rect x="2.0" y="6.5" width="2" height="2" fill="#fff"/><rect x="2.0" y="11.0" width="2" height="2" fill="#fff"/><rect x="6.5" y="2.0" width="2" height="2" fill="#fff"/><rect x="6.5" y="6.5" width="2" height="2" fill="#fff"/><rect x="6.5" y="11.0" width="2" height="2" fill="#fff"/><rect x="11.0" y="2.0" width="2" height="2" fill="#fff"/><rect x="11.0" y="6.5" width="2" height="2" fill="#fff"/><rect x="11.0" y="11.0" width="2" height="2" fill="#fff"/></svg><svg style="position:absolute;left:623.5px;top:795.75px;" width="8" height="4.5" viewBox="0 0 8 4.5"><path d="M0 0H8L4.0 4.5Z" fill="#e0e0e0"/></svg><svg style="position:absolute;left:643px;top:790px;" width="16" height="16" viewBox="0 0 16 16"><path d="M1.5 0V15.5H15.5M1.5 10H6V15.5" stroke="#fff" stroke-width="1.2" fill="none"/></svg><svg style="position:absolute;left:666px;top:789px;" width="17" height="17" viewBox="0 0 17 17"><circle cx="7" cy="10" r="6" stroke="#d8d8d8" stroke-width="1.2" fill="none"/><path d="M7 10 L15 2.5 M7 10H15" stroke="#d8d8d8" stroke-width="1.2"/></svg><svg style="position:absolute;left:690.5px;top:795.75px;" width="8" height="4.5" viewBox="0 0 8 4.5"><path d="M0 0H8L4.0 4.5Z" fill="#e0e0e0"/></svg><svg style="position:absolute;left:707px;top:789px;" width="17" height="17" viewBox="0 0 17 17"><path d="M2 2 L15 15" stroke="#e05050" stroke-width="1.2"/><path d="M8.5 1V16" stroke="#50d050" stroke-width="1.2"/><rect x="7" y="7" width="3" height="3" fill="#222" stroke="#fff" stroke-width="1"/></svg><svg style="position:absolute;left:731.5px;top:795.75px;" width="8" height="4.5" viewBox="0 0 8 4.5"><path d="M0 0H8L4.0 4.5Z" fill="#e0e0e0"/></svg><svg style="position:absolute;left:748px;top:790px;" width="17" height="16" viewBox="0 0 17 16"><path d="M1 14.5H16M1 14.5L13 3" stroke="#fff" stroke-width="1.2" fill="none"/><rect x="7" y="7.5" width="3" height="3" fill="#fff"/></svg><svg style="position:absolute;left:771px;top:789px;" width="18" height="18" viewBox="0 0 18 18"><rect x="5" y="5" width="12" height="12" stroke="#d8d8d8" stroke-width="1.2" fill="none"/><rect x="1" y="1" width="5" height="5" fill="#3b4453" stroke="#f0a060" stroke-width="1.2"/></svg><svg style="position:absolute;left:796.5px;top:795.75px;" width="8" height="4.5" viewBox="0 0 8 4.5"><path d="M0 0H8L4.0 4.5Z" fill="#e0e0e0"/></svg><svg style="position:absolute;left:815px;top:789px;" width="16" height="18" viewBox="0 0 16 18"><path d="M8 1 L11 9 L15 16 L10 14 L8 10 L6 14 L1 16 L5 9Z" fill="#ffffff"/></svg><svg style="position:absolute;left:826px;top:789px;" width="8" height="8" viewBox="0 0 8 8"><circle cx="4" cy="4" r="3" stroke="#fff" stroke-width="1.3" fill="none"/></svg><svg style="position:absolute;left:839px;top:789px;" width="16" height="18" viewBox="0 0 16 18"><path d="M8 1 L11 9 L15 16 L10 14 L8 10 L6 14 L1 16 L5 9Z" fill="#d0d0d0"/></svg><svg style="position:absolute;left:850px;top:789px;" width="7" height="9" viewBox="0 0 7 9"><path d="M4 0 L1 5 H4 L2.5 9 L6.5 3.5 H3.5Z" fill="#d0d0d0"/></svg><svg style="position:absolute;left:863px;top:789px;" width="16" height="18" viewBox="0 0 16 18"><path d="M8 1 L11 9 L15 16 L10 14 L8 10 L6 14 L1 16 L5 9Z" fill="#d0d0d0"/></svg><div style="position:absolute;left:888px;top:790.0px;line-height:16px;font-size:12px;color:#e8e8e8;white-space:nowrap;letter-spacing:-0.5px">1:1</div><svg style="position:absolute;left:905.5px;top:795.75px;" width="8" height="4.5" viewBox="0 0 8 4.5"><path d="M0 0H8L4.0 4.5Z" fill="#e0e0e0"/></svg><svg style="position:absolute;left:923px;top:789px;" width="18" height="18" viewBox="0 0 18 18"><path d="M9 0.5 V17.5 M0.5 9 H17.5 M3 3 L15 15 M15 3 L3 15" stroke="#d8d8d8" stroke-width="3.2"/><circle cx="9" cy="9" r="6" fill="#d8d8d8"/><circle cx="9" cy="9" r="2.6" fill="#3b4453"/></svg><div style="position:absolute;left:949px;top:790.0px;line-height:16px;font-size:12px;color:#f0f0f0;white-space:nowrap;letter-spacing:-0.4px">CYCAD</div><svg style="position:absolute;left:991.5px;top:795.75px;" width="8" height="4.5" viewBox="0 0 8 4.5"><path d="M0 0H8L4.0 4.5Z" fill="#e0e0e0"/></svg><svg style="position:absolute;left:1007px;top:789px;" width="18" height="18" viewBox="0 0 18 18"><path d="M9 1V17M1 9H17" stroke="#f0f0f0" stroke-width="2"/></svg><svg style="position:absolute;left:1034px;top:789px;" width="18" height="18" viewBox="0 0 18 18"><rect x="1" y="1" width="6" height="6" stroke="#d8d8d8" fill="none" stroke-width="1.2"/><circle cx="14" cy="6" r="3.3" stroke="#d8d8d8" fill="none" stroke-width="1.2"/><path d="M7.5 10 L11 16.5 H4Z" stroke="#d8d8d8" fill="none" stroke-width="1.2"/></svg><svg style="position:absolute;left:1064px;top:789px;" width="19" height="19" viewBox="0 0 19 19"><rect x="0.5" y="1" width="16" height="13" fill="#c8c8c8"/><path d="M2 11 L6 5 L10 9 L14 4" stroke="#5a6a7a" stroke-width="1.3" fill="none"/><path d="M13 8 L18.5 18 H7.5Z" fill="#f0a050"/><rect x="12.6" y="11.5" width="0.9" height="3" fill="#fff"/></svg><svg style="position:absolute;left:1093px;top:790px;" width="18" height="16" viewBox="0 0 18 16"><rect x="1" y="1" width="16" height="14" stroke="#d8d8d8" stroke-width="1.3" fill="none"/><path d="M4 12 L8 8 M4 12 V9 M4 12 H7 M14 4 L10 8 M14 4 V7 M14 4 H11" stroke="#d8d8d8" stroke-width="1.3"/></svg><div style="position:absolute;left:1121px;top:791px;width:17px;height:2px;background:#e8e8e8;"></div><div style="position:absolute;left:1121px;top:797px;width:17px;height:2px;background:#e8e8e8;"></div><div style="position:absolute;left:1121px;top:803px;width:17px;height:2px;background:#e8e8e8;"></div>
<div style="position:absolute;left:132px;top:257px;width:331px;height:320px;background:#f0f0f0;border-radius:8px 8px 7px 7px;box-shadow:0 0 0 1px rgba(0,0,0,.25)"></div><div style="position:absolute;left:132px;top:257px;width:331px;height:30px;background:#f3f3f3;border-radius:8px 8px 0 0"></div><div style="position:absolute;left:151px;top:262.25px;line-height:16.5px;font-size:12.5px;color:#9a9a9a;white-space:nowrap;;letter-spacing:0.3px">접이식 유리문</div><svg style="position:absolute;left:443px;top:266px;" width="11" height="11" viewBox="0 0 11 11"><path d="M0.5 0.5 L10.5 10.5 M10.5 0.5 L0.5 10.5" stroke="#8a8a8a" stroke-width="1"/></svg><div style="position:absolute;left:140px;top:296px;width:317px;height:247px;background:transparent;border:1px solid #d8d8d8;box-shadow:inset 1px 1px 0 #ffffff"></div><svg style="position:absolute;left:149px;top:310px;background:#000;shape-rendering:crispEdges" width="174" height="180" viewBox="0 0 174 180"><line x1="21.1" y1="77.6" x2="116.9" y2="22.4" stroke="#00ffff" stroke-width="1"/><line x1="116.9" y1="22.4" x2="124.4" y2="25.2" stroke="#00ffff" stroke-width="1"/><line x1="28.6" y1="81.0" x2="124.4" y2="25.2" stroke="#00ffff" stroke-width="1"/><line x1="21.1" y1="77.6" x2="28.6" y2="81.0" stroke="#00ffff" stroke-width="1"/><line x1="21.1" y1="77.6" x2="21.1" y2="170.6" stroke="#00ffff" stroke-width="1"/><line x1="28.6" y1="81.0" x2="28.6" y2="172.9" stroke="#00ffff" stroke-width="1"/><line x1="124.4" y1="25.2" x2="124.4" y2="118.3" stroke="#00ffff" stroke-width="1"/><line x1="121.6" y1="27.6" x2="121.6" y2="117.1" stroke="#00ffff" stroke-width="1"/><line x1="21.1" y1="170.6" x2="28.6" y2="172.9" stroke="#00ffff" stroke-width="1"/><line x1="28.6" y1="172.9" x2="124.4" y2="118.3" stroke="#00ffff" stroke-width="1"/><line x1="28.6" y1="169.4" x2="124.4" y2="115.5" stroke="#00ffff" stroke-width="1"/><line x1="28.6" y1="167.1" x2="121.6" y2="113.6" stroke="#00ffff" stroke-width="1"/><line x1="30.4" y1="82.4" x2="30.4" y2="163.6" stroke="#00ffff" stroke-width="1"/><line x1="30.4" y1="82.4" x2="121.6" y2="29.9" stroke="#00ffff" stroke-width="1"/><line x1="31.8" y1="84.8" x2="31.8" y2="165.0" stroke="#ffffff" stroke-width="1"/><line x1="48.3" y1="73.7" x2="48.3" y2="152.6" stroke="#ffffff" stroke-width="1"/><line x1="46.5" y1="76.5" x2="46.5" y2="150.2" stroke="#ffffff" stroke-width="1"/><line x1="31.8" y1="84.8" x2="48.3" y2="73.7" stroke="#ffffff" stroke-width="1"/><line x1="31.8" y1="165.0" x2="48.3" y2="152.6" stroke="#ffffff" stroke-width="1"/><line x1="33.7" y1="87.1" x2="46.5" y2="76.5" stroke="#ffffff" stroke-width="1"/><line x1="33.7" y1="87.1" x2="33.7" y2="162.7" stroke="#ffffff" stroke-width="1"/><line x1="33.7" y1="162.7" x2="46.5" y2="150.2" stroke="#ffffff" stroke-width="1"/><line x1="53.2" y1="72.7" x2="53.2" y2="152.9" stroke="#ffffff" stroke-width="1"/><line x1="70.4" y1="61.2" x2="70.4" y2="140.1" stroke="#ffffff" stroke-width="1"/><line x1="68.6" y1="64.0" x2="68.6" y2="137.7" stroke="#ffffff" stroke-width="1"/><line x1="53.2" y1="72.7" x2="70.4" y2="61.2" stroke="#ffffff" stroke-width="1"/><line x1="53.2" y1="152.9" x2="70.4" y2="140.1" stroke="#ffffff" stroke-width="1"/><line x1="55.1" y1="75.0" x2="68.6" y2="64.0" stroke="#ffffff" stroke-width="1"/><line x1="55.1" y1="75.0" x2="55.1" y2="150.6" stroke="#ffffff" stroke-width="1"/><line x1="55.1" y1="150.6" x2="68.6" y2="137.7" stroke="#ffffff" stroke-width="1"/><line x1="76.5" y1="59.5" x2="76.5" y2="139.8" stroke="#ffffff" stroke-width="1"/><line x1="93.7" y1="48.1" x2="93.7" y2="126.9" stroke="#ffffff" stroke-width="1"/><line x1="91.8" y1="50.9" x2="91.8" y2="124.6" stroke="#ffffff" stroke-width="1"/><line x1="76.5" y1="59.5" x2="93.7" y2="48.1" stroke="#ffffff" stroke-width="1"/><line x1="76.5" y1="139.8" x2="93.7" y2="126.9" stroke="#ffffff" stroke-width="1"/><line x1="78.3" y1="61.9" x2="91.8" y2="50.9" stroke="#ffffff" stroke-width="1"/><line x1="78.3" y1="61.9" x2="78.3" y2="137.4" stroke="#ffffff" stroke-width="1"/><line x1="78.3" y1="137.4" x2="91.8" y2="124.6" stroke="#ffffff" stroke-width="1"/><line x1="99.3" y1="46.7" x2="99.3" y2="126.9" stroke="#ffffff" stroke-width="1"/><line x1="116.9" y1="35.0" x2="116.9" y2="113.8" stroke="#ffffff" stroke-width="1"/><line x1="115.1" y1="37.7" x2="115.1" y2="111.5" stroke="#ffffff" stroke-width="1"/><line x1="99.3" y1="46.7" x2="116.9" y2="35.0" stroke="#ffffff" stroke-width="1"/><line x1="99.3" y1="126.9" x2="116.9" y2="113.8" stroke="#ffffff" stroke-width="1"/><line x1="101.1" y1="49.0" x2="115.1" y2="37.7" stroke="#ffffff" stroke-width="1"/><line x1="101.1" y1="49.0" x2="101.1" y2="124.6" stroke="#ffffff" stroke-width="1"/><line x1="101.1" y1="124.6" x2="115.1" y2="111.5" stroke="#ffffff" stroke-width="1"/><line x1="50.0" y1="71.4" x2="50.0" y2="152.8" stroke="#00ffff" stroke-width="1"/><line x1="72.7" y1="58.5" x2="72.7" y2="139.9" stroke="#00ffff" stroke-width="1"/><line x1="96.0" y1="45.4" x2="96.0" y2="126.8" stroke="#00ffff" stroke-width="1"/><line x1="119.3" y1="32.2" x2="119.3" y2="113.6" stroke="#00ffff" stroke-width="1"/><line x1="6.5" y1="69.0" x2="51.8" y2="47.3" stroke="#00ffff" stroke-width="1"/><line x1="65.8" y1="39.2" x2="112.3" y2="14.8" stroke="#00ffff" stroke-width="1"/><line x1="6.5" y1="69.0" x2="15.8" y2="75.2" stroke="#00ffff" stroke-width="1"/><line x1="103.0" y1="13.1" x2="112.3" y2="18.3" stroke="#00ffff" stroke-width="1"/><line x1="123.4" y1="18.3" x2="133.7" y2="14.1" stroke="#00ffff" stroke-width="1"/><line x1="129.0" y1="14.8" x2="132.0" y2="17.1" stroke="#00ffff" stroke-width="1"/><line x1="135.1" y1="18.3" x2="135.1" y2="60.1" stroke="#00ffff" stroke-width="1"/><line x1="135.1" y1="76.4" x2="135.1" y2="113.6" stroke="#00ffff" stroke-width="1"/><line x1="129.7" y1="21.7" x2="139.0" y2="17.8" stroke="#00ffff" stroke-width="1"/><line x1="129.7" y1="113.6" x2="139.0" y2="109.4" stroke="#00ffff" stroke-width="1"/><line x1="122.7" y1="133.4" x2="122.7" y2="148.5" stroke="#00ffff" stroke-width="1"/><line x1="124.6" y1="133.4" x2="124.6" y2="148.5" stroke="#00ffff" stroke-width="1"/><line x1="73.4" y1="153.1" x2="73.4" y2="167.6" stroke="#00ffff" stroke-width="1"/><line x1="75.8" y1="153.1" x2="75.8" y2="167.6" stroke="#00ffff" stroke-width="1"/><text x="55.3" y="47.3" font-size="11" fill="#ffffff" font-family="Liberation Sans">A</text><text x="136.7" y="15.5" font-size="11" fill="#ffffff" font-family="Liberation Sans">B</text><text x="130.4" y="71.7" font-size="11" fill="#ffffff" font-family="Liberation Sans">C</text><text x="128.1" y="143.8" font-size="11" fill="#ffffff" font-family="Liberation Sans">D</text><text x="79.7" y="164.3" font-size="11" fill="#ffffff" font-family="Liberation Sans">E</text></svg><div style="position:absolute;left:332px;top:313.5px;line-height:16px;font-size:12px;color:#000;white-space:nowrap;;letter-spacing:0.3px">A: 전체 길이:</div><div style="position:absolute;left:332px;top:349.0px;line-height:16px;font-size:12px;color:#000;white-space:nowrap;;letter-spacing:0.3px">B: 문틀 폭:</div><div style="position:absolute;left:332px;top:384.0px;line-height:16px;font-size:12px;color:#000;white-space:nowrap;;letter-spacing:0.3px">C: 높이:</div><div style="position:absolute;left:332px;top:419.0px;line-height:16px;font-size:12px;color:#000;white-space:nowrap;;letter-spacing:0.3px">D: 문틀 두께:</div><div style="position:absolute;left:332px;top:454.0px;line-height:16px;font-size:12px;color:#000;white-space:nowrap;;letter-spacing:0.3px">E: 문 폭:</div><div style="position:absolute;left:332px;top:489.0px;line-height:16px;font-size:12px;color:#000;white-space:nowrap;;letter-spacing:0.3px">문 두께:</div><div style="position:absolute;left:332px;top:524.0px;line-height:16px;font-size:12px;color:#000;white-space:nowrap;;letter-spacing:0.3px">그려질 높이:</div><div style="position:absolute;left:147.5px;top:499.5px;line-height:16px;font-size:12px;color:#000;white-space:nowrap;;letter-spacing:0.3px">유리문 개수:</div><div style="position:absolute;left:147.5px;top:524.0px;line-height:16px;font-size:12px;color:#000;white-space:nowrap;;letter-spacing:0.3px">유리 두께:</div><div style="position:absolute;left:411px;top:313px;width:37px;height:18px;background:#fff;border:1px solid #5a5a5a;box-shadow:inset 1px 1px 0 #a0a0a0"></div><div style="position:absolute;left:413px;top:315px;width:24px;height:14px;background:#0078d7;"></div><div style="position:absolute;left:413px;top:314.0px;line-height:16px;font-size:12px;color:#fff;white-space:nowrap;letter-spacing:-0.5px">5000</div><div style="position:absolute;left:437px;top:315px;width:1px;height:14px;background:#f08020;"></div><div style="position:absolute;left:399px;top:348px;width:49px;height:18px;background:#fff;border:1px solid #5a5a5a;box-shadow:inset 1px 1px 0 #a0a0a0"></div><div style="position:absolute;left:401px;top:349.0px;line-height:16px;font-size:12px;color:#000;white-space:nowrap;letter-spacing:-0.5px">200</div><div style="position:absolute;left:384px;top:383px;width:64px;height:18px;background:#fff;border:1px solid #5a5a5a;box-shadow:inset 1px 1px 0 #a0a0a0"></div><div style="position:absolute;left:386px;top:384.0px;line-height:16px;font-size:12px;color:#000;white-space:nowrap;letter-spacing:-0.5px">2500</div><div style="position:absolute;left:411px;top:418px;width:37px;height:18px;background:#fff;border:1px solid #5a5a5a;box-shadow:inset 1px 1px 0 #a0a0a0"></div><div style="position:absolute;left:413px;top:419.0px;line-height:16px;font-size:12px;color:#000;white-space:nowrap;letter-spacing:-0.5px">50</div><div style="position:absolute;left:387px;top:453px;width:61px;height:18px;background:#fff;border:1px solid #5a5a5a;box-shadow:inset 1px 1px 0 #a0a0a0"></div><div style="position:absolute;left:389px;top:454.0px;line-height:16px;font-size:12px;color:#000;white-space:nowrap;letter-spacing:-0.5px">100</div><div style="position:absolute;left:383px;top:488px;width:65px;height:18px;background:#fff;border:1px solid #5a5a5a;box-shadow:inset 1px 1px 0 #a0a0a0"></div><div style="position:absolute;left:385px;top:489.0px;line-height:16px;font-size:12px;color:#000;white-space:nowrap;letter-spacing:-0.5px">50</div><div style="position:absolute;left:407px;top:523px;width:41px;height:18px;background:#fff;border:1px solid #5a5a5a;box-shadow:inset 1px 1px 0 #a0a0a0"></div><div style="position:absolute;left:409px;top:524.0px;line-height:16px;font-size:12px;color:#000;white-space:nowrap;letter-spacing:-0.5px">0</div><div style="position:absolute;left:225px;top:499px;width:98px;height:18px;background:#fff;border:1px solid #5a5a5a;box-shadow:inset 1px 1px 0 #a0a0a0"></div><div style="position:absolute;left:227px;top:500.0px;line-height:16px;font-size:12px;color:#000;white-space:nowrap;letter-spacing:-0.5px">6</div><div style="position:absolute;left:213px;top:523px;width:110px;height:18px;background:#fff;border:1px solid #5a5a5a;box-shadow:inset 1px 1px 0 #a0a0a0"></div><div style="position:absolute;left:215px;top:524.0px;line-height:16px;font-size:12px;color:#000;white-space:nowrap;letter-spacing:-0.5px">8</div><div style="position:absolute;left:140px;top:551.0px;line-height:16px;font-size:12px;color:#000;white-space:nowrap;">CYCAD FANTASMO</div><div style="position:absolute;left:366px;top:552px;width:62px;height:19px;background:#fdfdfd;border:1px solid #0078d7;border-radius:3px;box-shadow:inset 0 0 0 1px #8cc0ec"></div><div style="position:absolute;left:367.0px;width:60px;text-align:center;top:553.0px;line-height:16px;font-size:12px;color:#000;white-space:nowrap;;letter-spacing:0.3px">확인</div>
<div style="position:absolute;left:479px;top:175px;width:439px;height:468px;background:#3b4453;"></div><div style="position:absolute;left:484px;top:199.0px;line-height:16px;font-size:12px;color:#f0f0f0;white-space:nowrap;;letter-spacing:0.3px">프레임 창호</div><div style="position:absolute;left:484px;top:274.0px;line-height:16px;font-size:12px;color:#f0f0f0;white-space:nowrap;;letter-spacing:0.3px">돌출 유리창</div><div style="position:absolute;left:484px;top:348.0px;line-height:16px;font-size:12px;color:#f0f0f0;white-space:nowrap;;letter-spacing:0.3px">직선 고정창</div><div style="position:absolute;left:484px;top:422.0px;line-height:16px;font-size:12px;color:#f0f0f0;white-space:nowrap;;letter-spacing:0.3px">연장 직선창</div><div style="position:absolute;left:484px;top:496.0px;line-height:16px;font-size:12px;color:#f0f0f0;white-space:nowrap;;letter-spacing:0.3px">연장 유리창</div><div style="position:absolute;left:484px;top:570.0px;line-height:16px;font-size:12px;color:#f0f0f0;white-space:nowrap;;letter-spacing:0.3px">상가 칸유리</div><div style="position:absolute;left:554px;top:180.0px;width:1px;height:72px;background:#232932;"></div><div style="position:absolute;left:553px;top:254.3px;width:1px;height:72px;background:#232932;"></div><div style="position:absolute;left:553px;top:328.6px;width:1px;height:72px;background:#232932;"></div><div style="position:absolute;left:553px;top:402.9px;width:1px;height:72px;background:#232932;"></div><div style="position:absolute;left:553px;top:477.2px;width:1px;height:72px;background:#232932;"></div><div style="position:absolute;left:553px;top:551.5px;width:1px;height:72px;background:#232932;"></div><div style="position:absolute;left:607px;top:180px;width:1px;height:71px;background:#232932;"></div><svg style="position:absolute;left:566px;top:182px" width="31" height="33" viewBox="0 0 31 33"><path d="M0.00 2.00 L30.00 0.00 L30.00 30.00 L0.00 32.00Z" fill="#d4d4d4" /><path d="M2.20 4.05 L4.00 3.93 L4.00 29.53 L2.20 29.65Z" fill="#163e4a" /><path d="M6.00 3.80 L9.00 3.60 L9.00 29.20 L6.00 29.40Z" fill="#163e4a" /><path d="M11.00 3.47 L14.00 3.27 L14.00 28.87 L11.00 29.07Z" fill="#163e4a" /><path d="M16.00 3.13 L19.00 2.93 L19.00 28.53 L16.00 28.73Z" fill="#163e4a" /><path d="M21.00 2.80 L24.00 2.60 L24.00 28.20 L21.00 28.40Z" fill="#163e4a" /><path d="M26.00 2.47 L27.80 2.35 L27.80 27.95 L26.00 28.07Z" fill="#163e4a" /></svg><div style="position:absolute;left:520.5px;width:120px;text-align:center;top:217.5px;line-height:16px;font-size:12px;color:#f0f0f0;white-space:nowrap;;letter-spacing:0.3px">접이식</div><svg style="position:absolute;left:627px;top:182px" width="30" height="32" viewBox="0 0 30 32"><path d="M0.00 2.00 L29.00 0.00 L29.00 29.00 L0.00 31.00Z" fill="#c4c4c4" /><path d="M1.50 3.40 L5.30 3.13 L5.30 29.13 L1.50 29.40Z" fill="#2b5662" /><path d="M6.30 3.07 L11.10 2.73 L11.10 28.73 L6.30 29.07Z" fill="#2b5662" /><path d="M12.10 2.67 L16.90 2.33 L16.90 28.33 L12.10 28.67Z" fill="#2b5662" /><path d="M17.90 2.27 L22.70 1.93 L22.70 27.93 L17.90 28.27Z" fill="#2b5662" /><path d="M23.70 1.87 L27.50 1.60 L27.50 27.60 L23.70 27.87Z" fill="#2b5662" /></svg><div style="position:absolute;left:581.0px;width:120px;text-align:center;top:217.5px;line-height:16px;font-size:12px;color:#f0f0f0;white-space:nowrap;;letter-spacing:0.3px">수직 유리</div><svg style="position:absolute;left:677px;top:183px" width="31" height="32" viewBox="0 0 31 32"><path d="M0.00 0.00 L30.00 0.00 L30.00 31.00 L0.00 31.00Z" fill="#c4c4c4" /><path d="M2.00 2.00 L14.20 2.00 L14.20 13.15 L2.00 13.15Z" fill="#2b5662" /><path d="M15.80 2.00 L28.00 2.00 L28.00 13.15 L15.80 13.15Z" fill="#2b5662" /><rect x="3.0" y="15" width="1" height="14" fill="#8a8a8a"/><rect x="5.6" y="15" width="1" height="14" fill="#8a8a8a"/><rect x="8.2" y="15" width="1" height="14" fill="#8a8a8a"/><rect x="10.8" y="15" width="1" height="14" fill="#8a8a8a"/><rect x="13.4" y="15" width="1" height="14" fill="#8a8a8a"/><rect x="16.0" y="15" width="1" height="14" fill="#8a8a8a"/><rect x="18.6" y="15" width="1" height="14" fill="#8a8a8a"/><rect x="21.2" y="15" width="1" height="14" fill="#8a8a8a"/><rect x="23.8" y="15" width="1" height="14" fill="#8a8a8a"/><rect x="26.4" y="15" width="1" height="14" fill="#8a8a8a"/></svg><div style="position:absolute;left:632.0px;width:120px;text-align:center;top:217.5px;line-height:16px;font-size:12px;color:#f0f0f0;white-space:nowrap;;letter-spacing:0.3px">난간창</div><svg style="position:absolute;left:726px;top:183px" width="32" height="32" viewBox="0 0 32 32"><path d="M0.00 2.00 L31.00 0.00 L31.00 29.00 L0.00 31.00Z" fill="#c4c4c4" /><path d="M1.50 3.40 L4.57 3.21 L4.57 6.91 L1.50 7.10Z" fill="#2b5662" /><path d="M1.50 8.30 L4.57 8.11 L4.57 12.71 L1.50 12.90Z" fill="#2b5662" /><path d="M1.50 14.10 L4.57 13.91 L4.57 18.51 L1.50 18.70Z" fill="#2b5662" /><path d="M1.50 19.90 L4.57 19.71 L4.57 24.31 L1.50 24.50Z" fill="#2b5662" /><path d="M1.50 25.70 L4.57 25.51 L4.57 29.21 L1.50 29.40Z" fill="#2b5662" /><path d="M5.77 3.13 L9.73 2.87 L9.73 6.57 L5.77 6.83Z" fill="#2b5662" /><path d="M5.77 8.03 L9.73 7.77 L9.73 12.37 L5.77 12.63Z" fill="#2b5662" /><path d="M5.77 13.83 L9.73 13.57 L9.73 18.17 L5.77 18.43Z" fill="#2b5662" /><path d="M5.77 19.63 L9.73 19.37 L9.73 23.97 L5.77 24.23Z" fill="#2b5662" /><path d="M5.77 25.43 L9.73 25.17 L9.73 28.87 L5.77 29.13Z" fill="#2b5662" /><path d="M10.93 2.79 L14.90 2.54 L14.90 6.24 L10.93 6.49Z" fill="#2b5662" /><path d="M10.93 7.69 L14.90 7.44 L14.90 12.04 L10.93 12.29Z" fill="#2b5662" /><path d="M10.93 13.49 L14.90 13.24 L14.90 17.84 L10.93 18.09Z" fill="#2b5662" /><path d="M10.93 19.29 L14.90 19.04 L14.90 23.64 L10.93 23.89Z" fill="#2b5662" /><path d="M10.93 25.09 L14.90 24.84 L14.90 28.54 L10.93 28.79Z" fill="#2b5662" /><path d="M16.10 2.46 L20.07 2.21 L20.07 5.91 L16.10 6.16Z" fill="#2b5662" /><path d="M16.10 7.36 L20.07 7.11 L20.07 11.71 L16.10 11.96Z" fill="#2b5662" /><path d="M16.10 13.16 L20.07 12.91 L20.07 17.51 L16.10 17.76Z" fill="#2b5662" /><path d="M16.10 18.96 L20.07 18.71 L20.07 23.31 L16.10 23.56Z" fill="#2b5662" /><path d="M16.10 24.76 L20.07 24.51 L20.07 28.21 L16.10 28.46Z" fill="#2b5662" /><path d="M21.27 2.13 L25.23 1.87 L25.23 5.57 L21.27 5.83Z" fill="#2b5662" /><path d="M21.27 7.03 L25.23 6.77 L25.23 11.37 L21.27 11.63Z" fill="#2b5662" /><path d="M21.27 12.83 L25.23 12.57 L25.23 17.17 L21.27 17.43Z" fill="#2b5662" /><path d="M21.27 18.63 L25.23 18.37 L25.23 22.97 L21.27 23.23Z" fill="#2b5662" /><path d="M21.27 24.43 L25.23 24.17 L25.23 27.87 L21.27 28.13Z" fill="#2b5662" /><path d="M26.43 1.79 L29.50 1.60 L29.50 5.30 L26.43 5.49Z" fill="#2b5662" /><path d="M26.43 6.69 L29.50 6.50 L29.50 11.10 L26.43 11.29Z" fill="#2b5662" /><path d="M26.43 12.49 L29.50 12.30 L29.50 16.90 L26.43 17.09Z" fill="#2b5662" /><path d="M26.43 18.29 L29.50 18.10 L29.50 22.70 L26.43 22.89Z" fill="#2b5662" /><path d="M26.43 24.09 L29.50 23.90 L29.50 27.60 L26.43 27.79Z" fill="#2b5662" /></svg><div style="position:absolute;left:681.0px;width:120px;text-align:center;top:217.5px;line-height:16px;font-size:12px;color:#f0f0f0;white-space:nowrap;;letter-spacing:0.3px">다중 유리</div><svg style="position:absolute;left:783px;top:182px" width="18" height="32" viewBox="0 0 18 32"><path d="M0.00 2.00 L17.00 0.00 L17.00 29.00 L0.00 31.00Z" fill="#c4c4c4" /><path d="M1.50 3.32 L7.90 2.57 L7.90 28.57 L1.50 29.32Z" fill="#2b5662" /><path d="M9.10 2.43 L15.50 1.68 L15.50 27.68 L9.10 28.43Z" fill="#2b5662" /></svg><div style="position:absolute;left:731.0px;width:120px;text-align:center;top:217.5px;line-height:16px;font-size:12px;color:#f0f0f0;white-space:nowrap;;letter-spacing:0.3px">유리 2</div><svg style="position:absolute;left:824px;top:182px" width="18" height="32" viewBox="0 0 18 32"><path d="M0.00 2.00 L17.00 0.00 L17.00 29.00 L0.00 31.00Z" fill="#c4c4c4" /><path d="M1.50 3.32 L7.90 2.57 L7.90 14.97 L1.50 15.72Z" fill="#2b5662" /><path d="M1.50 16.92 L7.90 16.17 L7.90 28.57 L1.50 29.32Z" fill="#2b5662" /><path d="M9.10 2.43 L15.50 1.68 L15.50 14.08 L9.10 14.83Z" fill="#2b5662" /><path d="M9.10 16.03 L15.50 15.28 L15.50 27.68 L9.10 28.43Z" fill="#2b5662" /></svg><div style="position:absolute;left:772.0px;width:120px;text-align:center;top:217.5px;line-height:16px;font-size:12px;color:#f0f0f0;white-space:nowrap;;letter-spacing:0.3px">유리 4</div><svg style="position:absolute;left:574px;top:258px;" width="24" height="32" viewBox="0 0 24 32"><path d="M1 10 Q13.200000000000001 6 23 0 V21 Q13.200000000000001 27 1 31Z" fill="#c8c8c8"/>
          <path d="M3 13 Q13.200000000000001 9 21 4 V20 Q13.200000000000001 24 3 28Z" fill="#2b5662"/>
          <path d="M1 10 Q13.200000000000001 6 23 0 L23 3 Q13.200000000000001 9 1 13Z" fill="#ececec"/></svg><div style="position:absolute;left:525.5px;width:120px;text-align:center;top:292.0px;line-height:16px;font-size:12px;color:#f0f0f0;white-space:nowrap;;letter-spacing:0.3px">반원돌출</div><svg style="position:absolute;left:628px;top:258px;" width="22" height="32" viewBox="0 0 22 32"><path d="M1 9 L19 0 L21 10 V29 L1 31Z" fill="#c8c8c8"/>
          <path d="M3 11 L18 11 V27 L3 28Z" fill="#2b5662"/>
          <path d="M1 9 L19 0 L21 10 Z" fill="#e4e4e4"/><path d="M18 10 L21 10 V29 L18 29Z" fill="#e8e8e8"/></svg><div style="position:absolute;left:579.5px;width:120px;text-align:center;top:292.0px;line-height:16px;font-size:12px;color:#f0f0f0;white-space:nowrap;;letter-spacing:0.3px">삼각돌출</div><svg style="position:absolute;left:679px;top:258px;" width="30" height="32" viewBox="0 0 30 32"><path d="M1 9 L25 1 L29 2 V23 L4 31 L1 29Z" fill="#b4b4b4"/>
      <path d="M4 12 L27 5 V21 L4 28Z" fill="#2b5662"/>
      <path d="M1 9 L25 1 L29 2 L29 5 L4 13 L1 12Z" fill="#ececec"/>
      <path d="M1 12 L4 13 V31 L1 29Z" fill="#d0d0d0"/>
      <path d="M4 28 L27 21 L29 23 L4 31Z" fill="#e0e0e0"/>
      <path d="M7 14 L26 7" stroke="#7aa0aa" stroke-width="1"/><path d="M25 7 V20" stroke="#7aa0aa" stroke-width="1"/><path d="M29 2 V23" stroke="#e8e8e8" stroke-width="1.5"/></svg><div style="position:absolute;left:633.0px;width:120px;text-align:center;top:292.0px;line-height:16px;font-size:12px;color:#f0f0f0;white-space:nowrap;;letter-spacing:0.3px">사각돌출</div><svg style="position:absolute;left:733px;top:258px;" width="30" height="32" viewBox="0 0 30 32"><path d="M1 9 L25 1 L29 2 V23 L4 31 L1 29Z" fill="#b4b4b4"/>
      <path d="M4 12 L27 5 V21 L4 28Z" fill="#2b5662"/>
      <path d="M1 9 L25 1 L29 2 L29 5 L4 13 L1 12Z" fill="#ececec"/>
      <path d="M1 12 L4 13 V31 L1 29Z" fill="#d0d0d0"/>
      <path d="M4 28 L27 21 L29 23 L4 31Z" fill="#e0e0e0"/>
      <path d="M7 14 L26 7" stroke="#7aa0aa" stroke-width="1"/><path d="M25 7 V20" stroke="#7aa0aa" stroke-width="1"/><path d="M29 2 V23" stroke="#e8e8e8" stroke-width="1.5"/><path d="M16.0 8.0 V25.0" stroke="#d8d8d8" stroke-width="1.6"/></svg><div style="position:absolute;left:687.5px;width:120px;text-align:center;top:292.0px;line-height:16px;font-size:12px;color:#f0f0f0;white-space:nowrap;;letter-spacing:0.3px">사각돌출</div><svg style="position:absolute;left:787px;top:258px;" width="30" height="32" viewBox="0 0 30 32"><path d="M1 9 L25 1 L29 2 V23 L4 31 L1 29Z" fill="#b4b4b4"/>
      <path d="M4 12 L27 5 V21 L4 28Z" fill="#2b5662"/>
      <path d="M1 9 L25 1 L29 2 L29 5 L4 13 L1 12Z" fill="#ececec"/>
      <path d="M1 12 L4 13 V31 L1 29Z" fill="#d0d0d0"/>
      <path d="M4 28 L27 21 L29 23 L4 31Z" fill="#e0e0e0"/>
      <path d="M7 14 L26 7" stroke="#7aa0aa" stroke-width="1"/><path d="M25 7 V20" stroke="#7aa0aa" stroke-width="1"/><path d="M29 2 V23" stroke="#e8e8e8" stroke-width="1.5"/></svg><div style="position:absolute;left:741.5px;width:120px;text-align:center;top:292.0px;line-height:16px;font-size:12px;color:#f0f0f0;white-space:nowrap;;letter-spacing:0.3px">사각돌출</div><svg style="position:absolute;left:570px;top:332px" width="15" height="33" viewBox="0 0 15 33"><path d="M0.00 0.00 L14.00 1.00 L14.00 31.00 L0.00 32.00Z" fill="#c4c4c4" /><path d="M2.00 2.12 L12.00 2.75 L12.00 29.25 L2.00 29.88Z" fill="#2b5662" /></svg><div style="position:absolute;left:517.5px;width:120px;text-align:center;top:365.0px;line-height:16px;font-size:12px;color:#f0f0f0;white-space:nowrap;;letter-spacing:0.3px">직선</div><svg style="position:absolute;left:617px;top:332px" width="15" height="33" viewBox="0 0 15 33"><path d="M0.00 0.00 L14.00 1.00 L14.00 31.00 L0.00 32.00Z" fill="#c4c4c4" /><path d="M2.00 2.12 L12.00 2.75 L12.00 15.29 L2.00 15.26Z" fill="#2b5662" /><path d="M2.00 16.74 L12.00 16.71 L12.00 29.25 L2.00 29.88Z" fill="#2b5662" /></svg><div style="position:absolute;left:563.5px;width:120px;text-align:center;top:365.0px;line-height:16px;font-size:12px;color:#f0f0f0;white-space:nowrap;;letter-spacing:0.3px">수평분할</div><svg style="position:absolute;left:671px;top:332px" width="15" height="33" viewBox="0 0 15 33"><path d="M0.00 0.00 L14.00 1.00 L14.00 31.00 L0.00 32.00Z" fill="#c4c4c4" /><path d="M2.00 2.12 L6.25 2.39 L6.25 29.61 L2.00 29.88Z" fill="#2b5662" /><path d="M7.75 2.48 L12.00 2.75 L12.00 29.25 L7.75 29.52Z" fill="#2b5662" /></svg><div style="position:absolute;left:618.0px;width:120px;text-align:center;top:365.0px;line-height:16px;font-size:12px;color:#f0f0f0;white-space:nowrap;;letter-spacing:0.3px">수직분할</div><svg style="position:absolute;left:737px;top:332px" width="15" height="33" viewBox="0 0 15 33"><path d="M0.00 0.00 L14.00 1.00 L14.00 31.00 L0.00 32.00Z" fill="#c4c4c4" /><path d="M2.00 2.12 L6.25 2.39 L6.25 15.27 L2.00 15.26Z" fill="#2b5662" /><path d="M2.00 16.74 L6.25 16.73 L6.25 29.61 L2.00 29.88Z" fill="#2b5662" /><path d="M7.75 2.48 L12.00 2.75 L12.00 15.29 L7.75 15.28Z" fill="#2b5662" /><path d="M7.75 16.72 L12.00 16.71 L12.00 29.25 L7.75 29.52Z" fill="#2b5662" /></svg><div style="position:absolute;left:683.5px;width:120px;text-align:center;top:365.0px;line-height:16px;font-size:12px;color:#f0f0f0;white-space:nowrap;;letter-spacing:0.3px">수평수직분할</div><svg style="position:absolute;left:802px;top:332px" width="16" height="33" viewBox="0 0 16 33"><path d="M0.00 0.00 L15.00 1.00 L15.00 31.00 L0.00 32.00Z" fill="#c4c4c4" /><path d="M2.00 2.12 L13.00 2.76 L13.00 6.82 L2.00 6.37Z" fill="#2b5662" /><path d="M2.00 7.86 L13.00 8.23 L13.00 29.24 L2.00 29.88Z" fill="#2b5662" /></svg><div style="position:absolute;left:749.5px;width:120px;text-align:center;top:365.0px;line-height:16px;font-size:12px;color:#f0f0f0;white-space:nowrap;;letter-spacing:0.3px">수평조절</div><svg style="position:absolute;left:585px;top:406px;" width="15" height="32" viewBox="0 0 15 32"><path d="M0.5 1.5 L14 0.5 V29 L0.5 31Z" fill="#22454f"/><path d="M0.5 1.5 L14 0.5 L14 2 L0.5 3Z" fill="#c4c4c4"/><rect x="12" y="0.5" width="2" height="28.5" fill="#c4c4c4"/><path d="M0.5 30 L14 28 V29.5 L0.5 31.5Z" fill="#c4c4c4"/></svg><div style="position:absolute;left:532.0px;width:120px;text-align:center;top:440.5px;line-height:16px;font-size:12px;color:#f0f0f0;white-space:nowrap;;letter-spacing:0.3px">한쪽프레임</div><svg style="position:absolute;left:585px;top:480px;" width="15" height="32" viewBox="0 0 15 32"><path d="M0.5 1.5 L14 0.5 V29 L0.5 31Z" fill="#22454f"/><rect x="0.5" y="0.5" width="13.5" height="2" fill="#c4c4c4"/><path d="M0.5 30 L14 28 V29.2 L0.5 31.2Z" fill="#c4c4c4"/></svg><div style="position:absolute;left:532.0px;width:120px;text-align:center;top:514.0px;line-height:16px;font-size:12px;color:#f0f0f0;white-space:nowrap;;letter-spacing:0.3px">프레임없음</div><svg style="position:absolute;left:651px;top:406px;" width="15" height="32" viewBox="0 0 15 32"><path d="M0.5 1.5 L14 0.5 V29 L0.5 31Z" fill="#22454f"/><path d="M0.5 1.5 L14 0.5 L14 2 L0.5 3Z" fill="#c4c4c4"/><rect x="12" y="0.5" width="2" height="28.5" fill="#c4c4c4"/><path d="M0.5 30 L14 28 V29.5 L0.5 31.5Z" fill="#c4c4c4"/><path d="M0.5 16.5 L14 15.0" stroke="#c4c4c4" stroke-width="1.4"/></svg><div style="position:absolute;left:598.0px;width:120px;text-align:center;top:440.5px;line-height:16px;font-size:12px;color:#f0f0f0;white-space:nowrap;;letter-spacing:0.3px">한쪽프레임</div><svg style="position:absolute;left:651px;top:480px;" width="15" height="32" viewBox="0 0 15 32"><path d="M0.5 1.5 L14 0.5 V29 L0.5 31Z" fill="#22454f"/><rect x="0.5" y="0.5" width="13.5" height="2" fill="#c4c4c4"/><path d="M0.5 30 L14 28 V29.2 L0.5 31.2Z" fill="#c4c4c4"/><path d="M0.5 16.5 L14 15.0" stroke="#c4c4c4" stroke-width="1.4"/></svg><div style="position:absolute;left:598.0px;width:120px;text-align:center;top:514.0px;line-height:16px;font-size:12px;color:#f0f0f0;white-space:nowrap;;letter-spacing:0.3px">프레임없음</div><svg style="position:absolute;left:717px;top:406px;" width="15" height="32" viewBox="0 0 15 32"><path d="M0.5 1.5 L14 0.5 V29 L0.5 31Z" fill="#22454f"/><path d="M0.5 1.5 L14 0.5 L14 2 L0.5 3Z" fill="#c4c4c4"/><rect x="12" y="0.5" width="2" height="28.5" fill="#c4c4c4"/><path d="M0.5 30 L14 28 V29.5 L0.5 31.5Z" fill="#c4c4c4"/><rect x="6.5" y="1" width="1.4" height="28" fill="#c4c4c4"/></svg><div style="position:absolute;left:664.0px;width:120px;text-align:center;top:440.5px;line-height:16px;font-size:12px;color:#f0f0f0;white-space:nowrap;;letter-spacing:0.3px">한쪽프레임</div><svg style="position:absolute;left:717px;top:480px;" width="15" height="32" viewBox="0 0 15 32"><path d="M0.5 1.5 L14 0.5 V29 L0.5 31Z" fill="#22454f"/><rect x="0.5" y="0.5" width="13.5" height="2" fill="#c4c4c4"/><path d="M0.5 30 L14 28 V29.2 L0.5 31.2Z" fill="#c4c4c4"/><rect x="6.5" y="1" width="1.4" height="28" fill="#c4c4c4"/></svg><div style="position:absolute;left:664.0px;width:120px;text-align:center;top:514.0px;line-height:16px;font-size:12px;color:#f0f0f0;white-space:nowrap;;letter-spacing:0.3px">프레임없음</div><svg style="position:absolute;left:783px;top:406px;" width="15" height="32" viewBox="0 0 15 32"><path d="M0.5 1.5 L14 0.5 V29 L0.5 31Z" fill="#22454f"/><path d="M0.5 1.5 L14 0.5 L14 2 L0.5 3Z" fill="#c4c4c4"/><rect x="12" y="0.5" width="2" height="28.5" fill="#c4c4c4"/><path d="M0.5 30 L14 28 V29.5 L0.5 31.5Z" fill="#c4c4c4"/><path d="M0.5 16.5 L14 15.0" stroke="#c4c4c4" stroke-width="1.4"/><rect x="6.5" y="1" width="1.4" height="28" fill="#c4c4c4"/></svg><div style="position:absolute;left:730.0px;width:120px;text-align:center;top:440.5px;line-height:16px;font-size:12px;color:#f0f0f0;white-space:nowrap;;letter-spacing:0.3px">한쪽프레임</div><svg style="position:absolute;left:783px;top:480px;" width="15" height="32" viewBox="0 0 15 32"><path d="M0.5 1.5 L14 0.5 V29 L0.5 31Z" fill="#22454f"/><rect x="0.5" y="0.5" width="13.5" height="2" fill="#c4c4c4"/><path d="M0.5 30 L14 28 V29.2 L0.5 31.2Z" fill="#c4c4c4"/><path d="M0.5 16.5 L14 15.0" stroke="#c4c4c4" stroke-width="1.4"/><rect x="6.5" y="1" width="1.4" height="28" fill="#c4c4c4"/></svg><div style="position:absolute;left:730.0px;width:120px;text-align:center;top:514.0px;line-height:16px;font-size:12px;color:#f0f0f0;white-space:nowrap;;letter-spacing:0.3px">프레임없음</div><svg style="position:absolute;left:849px;top:406px;" width="15" height="32" viewBox="0 0 15 32"><path d="M0.5 1.5 L14 0.5 V29 L0.5 31Z" fill="#22454f"/><path d="M0.5 1.5 L14 0.5 L14 2 L0.5 3Z" fill="#c4c4c4"/><rect x="12" y="0.5" width="2" height="28.5" fill="#c4c4c4"/><path d="M0.5 30 L14 28 V29.5 L0.5 31.5Z" fill="#c4c4c4"/><path d="M0.5 8 L14 7" stroke="#c4c4c4" stroke-width="1.4"/></svg><div style="position:absolute;left:796.0px;width:120px;text-align:center;top:440.5px;line-height:16px;font-size:12px;color:#f0f0f0;white-space:nowrap;;letter-spacing:0.3px">한쪽프레임</div><svg style="position:absolute;left:849px;top:480px;" width="15" height="32" viewBox="0 0 15 32"><path d="M0.5 1.5 L14 0.5 V29 L0.5 31Z" fill="#22454f"/><rect x="0.5" y="0.5" width="13.5" height="2" fill="#c4c4c4"/><path d="M0.5 30 L14 28 V29.2 L0.5 31.2Z" fill="#c4c4c4"/><path d="M0.5 8 L14 7" stroke="#c4c4c4" stroke-width="1.4"/></svg><div style="position:absolute;left:796.0px;width:120px;text-align:center;top:514.0px;line-height:16px;font-size:12px;color:#f0f0f0;white-space:nowrap;;letter-spacing:0.3px">프레임없음</div><svg style="position:absolute;left:574px;top:554px;" width="9" height="32" viewBox="0 0 9 32"><path d="M0.5 1.5 L8 0.5 V29 L0.5 31Z" fill="#22454f"/><path d="M0.5 1.5 L8 0.5 V29 L0.5 31Z" fill="none" stroke="#c4c4c4" stroke-width="1.6"/></svg><div style="position:absolute;left:518.0px;width:120px;text-align:center;top:588.0px;line-height:16px;font-size:12px;color:#f0f0f0;white-space:nowrap;;letter-spacing:0.3px">직선</div><svg style="position:absolute;left:626px;top:554px;" width="9" height="32" viewBox="0 0 9 32"><path d="M0.5 1.5 L8 0.5 V29 L0.5 31Z" fill="#22454f"/><path d="M0.5 1.5 L7.5 0.8 V28.8 L0.5 30.8" fill="none" stroke="#c4c4c4" stroke-width="1.6"/></svg><div style="position:absolute;left:569.5px;width:120px;text-align:center;top:588.0px;line-height:16px;font-size:12px;color:#f0f0f0;white-space:nowrap;;letter-spacing:0.3px">한쪽프레임</div><svg style="position:absolute;left:691px;top:554px;" width="9" height="32" viewBox="0 0 9 32"><path d="M0.5 1.5 L8 0.5 V29 L0.5 31Z" fill="#22454f"/><rect x="0.5" y="0.5" width="7.5" height="2" fill="#c4c4c4"/><path d="M0.5 30 L8 28 V29.2 L0.5 31.2Z" fill="#c4c4c4"/></svg><div style="position:absolute;left:635.7px;width:120px;text-align:center;top:588.0px;line-height:16px;font-size:12px;color:#f0f0f0;white-space:nowrap;;letter-spacing:0.3px">프레임없음</div><svg style="position:absolute;left:752px;top:554px;" width="9" height="32" viewBox="0 0 9 32"><path d="M0.5 1.5 L8 0.5 V29 L0.5 31Z" fill="#22454f"/><path d="M0.5 1.5 L8 0.5 V29 L0.5 31Z" fill="none" stroke="#c4c4c4" stroke-width="1.6"/><path d="M0.5 7.5 L8 7" stroke="#c4c4c4" stroke-width="1.3"/></svg><div style="position:absolute;left:696.3px;width:120px;text-align:center;top:588.0px;line-height:16px;font-size:12px;color:#f0f0f0;white-space:nowrap;;letter-spacing:0.3px">상하분할</div><svg style="position:absolute;left:812px;top:554px;" width="9" height="32" viewBox="0 0 9 32"><path d="M0.5 1.5 L8 0.5 V29 L0.5 31Z" fill="#22454f"/><path d="M0.5 1.5 L7.5 0.8 V28.8 L0.5 30.8" fill="none" stroke="#c4c4c4" stroke-width="1.6"/><path d="M0.5 7.5 L8 7" stroke="#c4c4c4" stroke-width="1.3"/></svg><div style="position:absolute;left:755.9px;width:120px;text-align:center;top:588.0px;line-height:16px;font-size:12px;color:#f0f0f0;white-space:nowrap;;letter-spacing:0.3px">한쪽프레임</div><svg style="position:absolute;left:878px;top:554px;" width="9" height="32" viewBox="0 0 9 32"><path d="M0.5 1.5 L8 0.5 V29 L0.5 31Z" fill="#22454f"/><rect x="0.5" y="0.5" width="7.5" height="2" fill="#c4c4c4"/><path d="M0.5 30 L8 28 V29.2 L0.5 31.2Z" fill="#c4c4c4"/><path d="M0.5 7.5 L8 7" stroke="#c4c4c4" stroke-width="1.3"/></svg><div style="position:absolute;left:821.9px;width:120px;text-align:center;top:588.0px;line-height:16px;font-size:12px;color:#f0f0f0;white-space:nowrap;;letter-spacing:0.3px">프레임없음</div><div style="position:absolute;left:481px;top:624px;width:16px;height:18px;background:#3b4453;border:1px solid #6ab8f0"></div><svg style="position:absolute;left:484px;top:627px;" width="10" height="11" viewBox="0 0 10 11"><circle cx="4.5" cy="6" r="4.2" fill="#d8d8d8"/><circle cx="6.5" cy="4" r="3" fill="#3b4453"/><circle cx="6.5" cy="4" r="2.3" fill="#e8e8e8"/></svg><div style="position:absolute;left:638.0px;width:120px;text-align:center;top:624.5px;line-height:16px;font-size:12px;color:#f0f0f0;white-space:nowrap;;letter-spacing:0.3px">프레임 창</div><div style="position:absolute;left:293px;top:241px;width:284px;height:3px;background:#008c8c;"></div><div style="position:absolute;left:293px;top:241px;width:3px;height:11px;background:#008c8c;"></div><div style="position:absolute;left:574px;top:234px;width:3px;height:10px;background:#008c8c;"></div>
</div></body></html>
